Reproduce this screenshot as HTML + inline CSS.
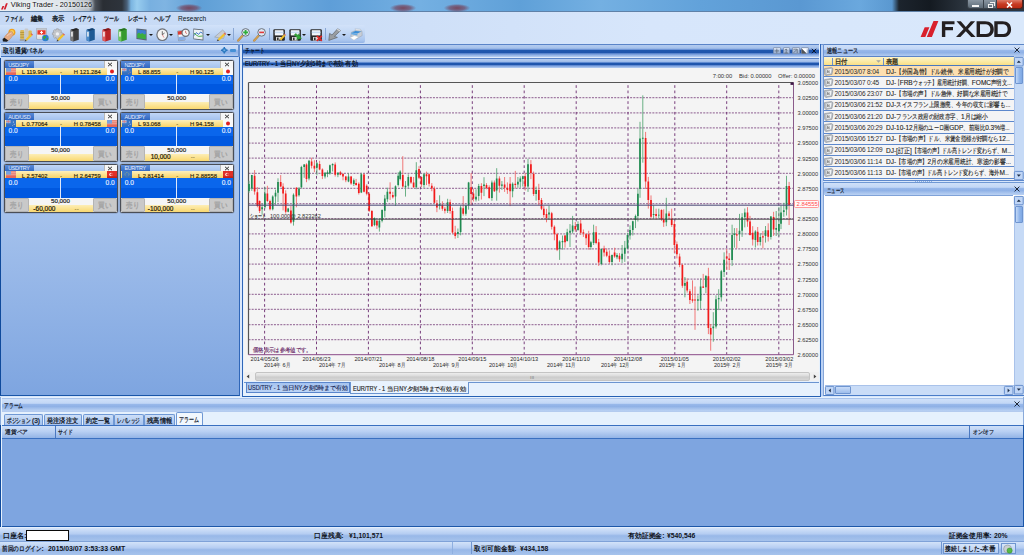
<!DOCTYPE html>
<html lang="ja"><head><meta charset="utf-8"><title>Viking Trader - 20150126</title>
<style>
*{box-sizing:border-box;margin:0;padding:0}
html,body{width:1024px;height:555px;overflow:hidden}
body{position:relative;background:#d7e6fb;font-family:"Liberation Sans",sans-serif;font-size:7px;color:#1a1a1a;line-height:1}
.a{position:absolute}
.t{position:absolute;white-space:nowrap;line-height:8px;height:8px}
svg{position:absolute;overflow:visible}
/* title bar */
#title{left:0;top:0;width:1024px;height:12px;background:linear-gradient(90deg,#e9eef2 0,#dfe6ec 60px,#b4bcc4 89px,#4a5058 95px,#2a2e34 103px,#2e343c 122px,#4a6078 127px,#7ab4e0 131px,#98cdef 137px,#78b0e0 150px,#7fb4e2 165px,#5f9fd6 200px,#74aee0 260px,#5e9ed8 330px,#74b0e2 420px,#5fa0d8 520px,#74b0e2 600px,#62a2da 700px,#5a98d2 800px,#6aa8de 860px,#5a98d0 892px,#1c242d 899px,#141a21 930px,#2c353f 966px)}
#title i{position:absolute;left:0;right:0;bottom:0;height:1px;background:#5f81a8}
#menu{left:0;top:12px;width:1024px;height:32px;background:linear-gradient(90deg,#c6d9f5 0,#c9dcf6 256px,#d2e2f9 512px,#d7e6fb 650px,#d9e8fb 1024px)}
#menu .t{top:14.5px;font-size:6.6px;color:#101820}
#tool{left:0;top:25px;width:365px;height:18px;background:linear-gradient(180deg,#d2e2f9 0,#c3d8f5 40%,#a9c5ee 85%,#94b4e6 100%);border-radius:0 2px 2px 0}
.dd{position:absolute;top:34px;width:0;height:0;border-left:2.2px solid transparent;border-right:2.2px solid transparent;border-top:2.5px solid #1a1a1a}
.sep{position:absolute;top:28px;width:1px;height:12px;background:#8aa7d4}
/* generic panel caption */
.cap{position:absolute;height:12px;background:linear-gradient(180deg,#cfe0f9 0,#c2d7f6 36%,#98b8ea 44%,#8fb1e6 62%,#a9c5ee 84%,#bad1f3 100%);border-top:1px solid #5c86c6}
.capA{position:absolute;height:12px;background:linear-gradient(180deg,#b4ccf0 0,#a4c0ea 27%,#6b93d6 38%,#2058ae 45%,#1f55ac 63%,#6a92d6 73%,#9ab8e8 88%,#b8cff2 100%);border-top:1px solid #5a84c8}
/* rate tile */
.tile{position:absolute;width:113.5px;height:49.5px;background:#f4f4f4;border:1px solid #4a4e56;border-radius:1.5px;box-shadow:0 0 0 .5px rgba(80,90,110,.35)}
.tile div{position:absolute}
.tl{left:0;top:0;width:111.5px;height:7px;background:linear-gradient(180deg,#c0d6f6,#a4c2ee)}
.tn{left:0;top:0;width:28.5px;height:7px;background:linear-gradient(180deg,#5a8ad8,#2f66c0)}
.tc{left:98.5px;top:0;width:13px;height:6.6px;background:#f6f6f6;border-left:.5px solid #b8b8b8}
.ty{left:0;top:6.6px;width:111.5px;height:7.1px;background:linear-gradient(180deg,#fdf0bd,#fbe08a 55%,#f8d468)}
.tb{left:0;top:13.7px;width:111.5px;height:9.5px;background:#0a66ec}
.tb2{left:0;top:23.2px;width:111.5px;height:9.8px;background:#0058e0}
.tv{left:54.6px;top:13px;width:1px;height:20px;background:#dfe8fa}
.bs{left:0;top:33px;width:24px;height:14.5px;background:#c9c9c9;border:.5px solid #b4b4b4;border-radius:1px}
.bb{left:87.5px;top:33px;width:24px;height:14.5px;background:#c9c9c9;border:.5px solid #b4b4b4;border-radius:1px}
.tw{left:24px;top:33px;width:63.5px;height:7.6px;background:#f5f5f5}
.ty2{left:24px;top:40.6px;width:63.5px;height:7px;background:linear-gradient(180deg,#fdeeb6,#f9d870)}

</style></head>
<body>
<div id="title" class="a"><i></i></div>
<div class="a" style="left:176px;top:3.6px;width:26px;height:8.4px;background:radial-gradient(ellipse at center,rgba(120,48,64,.8) 0,rgba(118,58,80,.6) 42%,rgba(110,90,140,0) 72%)"></div>
<div class="a" style="left:390px;top:3.6px;width:26px;height:8.4px;background:radial-gradient(ellipse at center,rgba(120,48,64,.8) 0,rgba(118,58,80,.6) 42%,rgba(110,90,140,0) 72%)"></div>
<div class="a" style="left:444px;top:3.6px;width:26px;height:8.4px;background:radial-gradient(ellipse at center,rgba(120,48,64,.8) 0,rgba(118,58,80,.6) 42%,rgba(110,90,140,0) 72%)"></div>
<svg style="left:1px;top:2.8px" width="7" height="6.6" viewBox="0 0 7 6.6"><path d="M0 6.4 L1.5 3 L3.3 3 L1.8 6.4Z M2.7 6.4 L5 0.2 L6.8 0.2 L4.5 6.4Z" fill="#d3202c"/></svg>
<div class="t" style="left:10.8px;top:1.3px;font-size:7.25px;color:#111;text-shadow:0 0 3px #fff,0 0 4px #fff;">Viking Trader - 20150126</div>
<div class="a" style="left:967px;top:0px;width:17px;height:9px;background:linear-gradient(180deg,#8a96a2,#5d6a76);border:1px solid #39414a;border-top:0;border-radius:0 0 0 3px"></div>
<div class="a" style="left:984px;top:0px;width:13px;height:9px;background:linear-gradient(180deg,#8a96a2,#5d6a76);border:1px solid #39414a;border-top:0;border-left:0"></div>
<div class="a" style="left:997px;top:0px;width:26px;height:9px;background:linear-gradient(180deg,#dd7b68,#c63b23 50%,#b82a14);border:1px solid #5a2018;border-top:0;border-left:0;border-radius:0 0 3px 0"></div>
<div class="a" style="left:972px;top:5px;width:7px;height:2px;background:#f4f4f4"></div>
<div class="a" style="left:987.5px;top:3.5px;width:5px;height:4px;border:1px solid #f0f0f0"></div>
<div class="a" style="left:989.5px;top:2px;width:5px;height:4px;border:1px solid #f0f0f0;border-left:0;border-bottom:0"></div>
<svg style="left:1006px;top:2px" width="7" height="6" viewBox="0 0 7 6"><path d="M1 0.5 L6 5.5 M6 0.5 L1 5.5" stroke="#fff" stroke-width="1.6"/></svg>
<div id="menu" class="a"></div>
<svg style="left:4.5px;top:13.8px" width="18" height="8.8"><text x="0" y="6.8" font-size="6.8" fill="#0c1420" font-weight="normal" textLength="18" lengthAdjust="spacingAndGlyphs" stroke="#0c1420" stroke-width="0.3">ファイル</text></svg>
<svg style="left:31px;top:13.8px" width="12.5" height="8.8"><text x="0" y="6.8" font-size="6.8" fill="#0c1420" font-weight="normal" textLength="12.5" lengthAdjust="spacingAndGlyphs" stroke="#0c1420" stroke-width="0.3">編集</text></svg>
<svg style="left:52px;top:13.8px" width="12.5" height="8.8"><text x="0" y="6.8" font-size="6.8" fill="#0c1420" font-weight="normal" textLength="12.5" lengthAdjust="spacingAndGlyphs" stroke="#0c1420" stroke-width="0.3">表示</text></svg>
<svg style="left:73px;top:13.8px" width="23.5" height="8.8"><text x="0" y="6.8" font-size="6.8" fill="#0c1420" font-weight="normal" textLength="23.5" lengthAdjust="spacingAndGlyphs" stroke="#0c1420" stroke-width="0.3">レイアウト</text></svg>
<svg style="left:104px;top:13.8px" width="15" height="8.8"><text x="0" y="6.8" font-size="6.8" fill="#0c1420" font-weight="normal" textLength="15" lengthAdjust="spacingAndGlyphs" stroke="#0c1420" stroke-width="0.3">ツール</text></svg>
<svg style="left:127.5px;top:13.8px" width="20" height="8.8"><text x="0" y="6.8" font-size="6.8" fill="#0c1420" font-weight="normal" textLength="20" lengthAdjust="spacingAndGlyphs" stroke="#0c1420" stroke-width="0.3">レポート</text></svg>
<svg style="left:154px;top:13.8px" width="16" height="8.8"><text x="0" y="6.8" font-size="6.8" fill="#0c1420" font-weight="normal" textLength="16" lengthAdjust="spacingAndGlyphs" stroke="#0c1420" stroke-width="0.3">ヘルプ</text></svg>
<div class="t" style="left:178px;top:15px;font-size:6.6px;color:#0c1420;">Research</div>
<div id="tool" class="a"></div>
<div class="a" style="left:0px;top:43.9px;width:1024px;height:1.1px;background:#6a92d2"></div>
<svg style="left:2px;top:27.5px" width="14" height="14" viewBox="0 0 14 14"><circle cx="9.9" cy="4.2" r="3.5" fill="#f0a01c"/><circle cx="9.9" cy="4.2" r="2.1" fill="#f9d458"/><path d="M1.8 10.4 C3.2 7.4 5.6 5 8.4 3.6 C10 3 11 4 10.4 5 C11.6 5.6 11.6 7 10.6 7.6 C9.6 9.8 7.6 11.8 5.6 13Z" fill="#e3ab86" stroke="#b98662" stroke-width=".5"/><path d="M5 8 C6.4 6.6 8 5.6 9.4 5" stroke="#f2cdb2" stroke-width=".9" fill="none"/><path d="M0.6 11 L2.4 9.8 L6.2 12.6 L4.8 13.8 L0.9 13.6Z" fill="#1c1c1c"/></svg>
<svg style="left:18.5px;top:28px" width="14" height="13.5" viewBox="0 0 14 13.5"><rect x="1.2" y="2" width="4" height="9.6" rx="1" fill="#d9b95e"/><rect x="1.2" y="4" width="4" height="0.7" fill="#a88a36"/><rect x="1.2" y="6.4" width="4" height="0.7" fill="#a88a36"/><rect x="1.2" y="8.8" width="4" height="0.7" fill="#a88a36"/><rect x="5.6" y="0.6" width="3.6" height="10" rx="1" fill="#c9c9c9"/><rect x="9.4" y="2.6" width="3.4" height="6" rx="1" fill="#d9b95e"/><path d="M6.2 11.6 L11.6 6 L13.2 7.6 L7.8 13Z" fill="#f0c22c"/><path d="M6.2 11.6 L7.8 13 L5.6 13.4Z" fill="#444"/><path d="M11.6 6 L12.4 5.2 L14 6.8 L13.2 7.6Z" fill="#e05a4a"/><rect x="0.8" y="11.2" width="5" height="1.6" fill="#9c9c9c"/></svg>
<svg style="left:35.5px;top:28px" width="13.5" height="13.5" viewBox="0 0 13.5 13.5"><rect x="0.8" y="0.5" width="9.4" height="10.6" fill="#f4f5f7" stroke="#8e949c" stroke-width=".6"/><rect x="0.8" y="0.5" width="9.4" height="1.5" fill="#c4c9d0"/><rect x="1.4" y="2.2" width="8.2" height="4.4" fill="#e8392c"/><rect x="5" y="2.9" width="1" height="3" fill="#fff"/><rect x="4" y="3.9" width="3" height="1" fill="#fff"/><path d="M1.6 8 H7 M1.6 9.4 H6" stroke="#c8ccd2" stroke-width=".5"/><circle cx="9.4" cy="10" r="3.3" fill="#2f7fd0"/><path d="M7.4 8.4 C8.4 7.6 9.8 7.8 10.2 9 C9.6 10 8.6 10.2 8.4 11.6 C7.4 11 6.8 9.6 7.4 8.4Z M10.8 10.4 L12.2 10 L11.8 11.8 L10.6 12.2Z" fill="#3da83a"/></svg>
<svg style="left:50.5px;top:28px" width="14" height="13.5" viewBox="0 0 14 13.5"><path d="M5.4 0.8 L7.4 0.8 L7.8 2.2 L9.2 1.6 L10.6 3 L9.8 4.4 L11.4 4.8 L11.4 6.8 L9.8 7.2 L10.6 8.8 L9.2 10.2 L7.8 9.4 L7.4 11 L5.4 11 L5 9.4 L3.6 10.2 L2.2 8.8 L3 7.2 L1.4 6.8 L1.4 4.8 L3 4.4 L2.2 3 L3.6 1.6 L5 2.2Z" fill="#c4c6ca" stroke="#8c8e92" stroke-width=".5"/><circle cx="6.4" cy="5.9" r="1.7" fill="#eef0f3"/><path d="M6.2 11.6 L11.6 6 L13.2 7.6 L7.8 13Z" fill="#f0c22c"/><path d="M6.2 11.6 L7.8 13 L5.6 13.4Z" fill="#444"/><path d="M11.6 6 L12.4 5.2 L14 6.8 L13.2 7.6Z" fill="#e05a4a"/></svg>
<svg style="left:70.4px;top:27.8px" width="9.4" height="13.8" viewBox="0 0 9.4 13.8"><path d="M0.6 1.8 L6.2 0.3 L8.8 1.3 L8.8 11.8 L3.4 13.5 L0.6 12.4Z" fill="#3e3e3e"/><path d="M0.6 1.8 L3.4 2.9 L3.4 13.5 L0.6 12.4Z" fill="#7c7c7c"/><path d="M0.6 1.8 L6.2 0.3 L8.8 1.3 L3.4 2.9Z" fill="#262626"/><rect x="1.2" y="3.8" width="1.5" height="4.8" fill="#f4f4f4"/></svg>
<svg style="left:86.4px;top:27.8px" width="9.4" height="13.8" viewBox="0 0 9.4 13.8"><path d="M0.6 1.8 L6.2 0.3 L8.8 1.3 L8.8 11.8 L3.4 13.5 L0.6 12.4Z" fill="#1d5a94"/><path d="M0.6 1.8 L3.4 2.9 L3.4 13.5 L0.6 12.4Z" fill="#4c8ccc"/><path d="M0.6 1.8 L6.2 0.3 L8.8 1.3 L3.4 2.9Z" fill="#143f6c"/><rect x="1.2" y="3.8" width="1.5" height="4.8" fill="#f4f4f4"/></svg>
<svg style="left:102.4px;top:27.8px" width="9.4" height="13.8" viewBox="0 0 9.4 13.8"><path d="M0.6 1.8 L6.2 0.3 L8.8 1.3 L8.8 11.8 L3.4 13.5 L0.6 12.4Z" fill="#b82426"/><path d="M0.6 1.8 L3.4 2.9 L3.4 13.5 L0.6 12.4Z" fill="#e06060"/><path d="M0.6 1.8 L6.2 0.3 L8.8 1.3 L3.4 2.9Z" fill="#80181a"/><rect x="1.2" y="3.8" width="1.5" height="4.8" fill="#f4f4f4"/></svg>
<svg style="left:118.4px;top:27.8px" width="9.4" height="13.8" viewBox="0 0 9.4 13.8"><path d="M0.6 1.8 L6.2 0.3 L8.8 1.3 L8.8 11.8 L3.4 13.5 L0.6 12.4Z" fill="#369a2e"/><path d="M0.6 1.8 L3.4 2.9 L3.4 13.5 L0.6 12.4Z" fill="#70c860"/><path d="M0.6 1.8 L6.2 0.3 L8.8 1.3 L3.4 2.9Z" fill="#267020"/><rect x="1.2" y="3.8" width="1.5" height="4.8" fill="#f4f4f4"/></svg>
<svg style="left:136px;top:28.2px" width="11.5" height="13" viewBox="0 0 11.5 13"><path d="M0.4 0.6 L10.6 1.6 L10.6 12.4 L0.4 11Z" fill="#5a6470"/><path d="M1.2 1.6 L9.8 2.4 L9.8 11.2 L1.2 10Z" fill="#3f7fd0"/><path d="M1.2 6 L3 4.6 L4.6 6 L6.4 5 L8 6.6 L9.8 6 L9.8 11.2 L1.2 10Z" fill="#3cae3c"/></svg>
<svg style="left:155.8px;top:27.8px" width="12.6" height="13.4" viewBox="0 0 12.6 13.4"><ellipse cx="6.3" cy="6.7" rx="6" ry="6.4" fill="#6e7278"/><ellipse cx="6.3" cy="6.7" rx="4.8" ry="5.2" fill="#f4f4f4"/><path d="M6.3 6.7 L6.3 3.2 M6.3 6.7 L8.6 5" stroke="#333" stroke-width=".7"/><path d="M6.3 6.7 L8 9.6" stroke="#d03030" stroke-width=".5"/></svg>
<svg style="left:176.8px;top:28px" width="13" height="13.4" viewBox="0 0 13 13.4"><path d="M0.6 3.2 L7.2 2.4 L8 12 L1.6 12.8Z" fill="#eef2f8" stroke="#7a8494" stroke-width=".7"/><path d="M0.8 3.4 L7.2 2.6 L7.5 6 L1.1 6.8Z" fill="#dc3c32"/><path d="M1.4 9 L7.8 8.2 L8 11.8 L1.7 12.6Z" fill="#88aee4"/><circle cx="8.6" cy="4.8" r="4.2" fill="#6a6e74"/><circle cx="8.6" cy="4.8" r="3" fill="#f6f6f6"/><path d="M8.6 4.8 L8.6 2.8 M8.6 4.8 L10 5.6" stroke="#c03030" stroke-width=".6"/></svg>
<svg style="left:193.3px;top:28.2px" width="11.5" height="13" viewBox="0 0 11.5 13"><path d="M0.4 0.6 L10.4 1.4 L10.4 12.4 L0.4 11.2Z" fill="#5e6670"/><path d="M1 1.4 L9.6 2.2 L9.6 11.4 L1 10.4Z" fill="#eef2f4"/><path d="M1 7.6 L3.4 4.6 L5.6 6.4 L7.6 4 L9.6 5.4" stroke="#2c6cc8" stroke-width=".9" fill="none"/><path d="M1 5 L3.2 7 L5.6 8.4 L9.6 8" stroke="#40a840" stroke-width=".9" fill="none"/></svg>
<svg style="left:213.5px;top:28.5px" width="13.5" height="12.5" viewBox="0 0 13.5 12.5"><path d="M0.6 8 L8.6 1 L11.4 3.6 L9.6 9.4 L5.6 9Z" fill="#c8ccd2" stroke="#8a9098" stroke-width=".5"/><path d="M3.6 10.2 L9.6 4.4 L11.2 6 L5.2 11.8Z" fill="#f0c22c"/><path d="M3.6 10.2 L5.2 11.8 L2.8 12.2Z" fill="#4a4a4a"/><path d="M9.6 4.4 L10.6 3.4 L12.2 5 L11.2 6Z" fill="#e0685a"/></svg>
<div class="sep" style="left:233px"></div>
<svg style="left:236.5px;top:27.8px" width="13.5" height="13.6" viewBox="0 0 13.5 13.6"><path d="M1.2 12.6 L6 7.2" stroke="#b8863c" stroke-width="2.2" stroke-linecap="round"/><path d="M1.2 12.6 L6 7.2" stroke="#e0b060" stroke-width="1" stroke-linecap="round"/><circle cx="8.6" cy="4.4" r="3.8" fill="#dfe9f4" stroke="#6a727c" stroke-width="1"/><path d="M8.6 2 V6.8 M6.2 4.4 H11" stroke="#2fae3a" stroke-width="1.8"/></svg>
<svg style="left:253px;top:27.8px" width="13.5" height="13.6" viewBox="0 0 13.5 13.6"><path d="M1.2 12.6 L6 7.2" stroke="#b8863c" stroke-width="2.2" stroke-linecap="round"/><path d="M1.2 12.6 L6 7.2" stroke="#e0b060" stroke-width="1" stroke-linecap="round"/><circle cx="8.6" cy="4.4" r="3.8" fill="#dfe9f4" stroke="#6a727c" stroke-width="1"/><path d="M6.2 4.4 H11" stroke="#e03a3a" stroke-width="1.6"/></svg>
<div class="sep" style="left:268.5px"></div>
<svg style="left:272.8px;top:28.6px" width="12.5" height="12.2" viewBox="0 0 12.5 12.2"><rect x="0.3" y="0.3" width="11.6" height="11.4" rx="1.2" fill="#2b2b2b"/><rect x="1.8" y="1.2" width="8.6" height="5.2" fill="#f4f7fb"/><rect x="1.8" y="2.6" width="8.6" height="1.6" fill="#c8dcf2"/><rect x="3" y="8" width="5.6" height="3.6" fill="#d8d8d8"/><rect x="4" y="8.6" width="1.6" height="2.6" fill="#333"/></svg>
<svg style="left:279px;top:33px" width="7" height="8" viewBox="0 0 7 8"><path d="M0.6 6 L5 1.4 L6.4 2.8 L2 7.4Z" fill="#f0c22c"/><path d="M0.6 6 L2 7.4 L0 8Z" fill="#444"/><path d="M5 1.4 L5.6 0.6 L7 2 L6.4 2.8Z" fill="#e0685a"/></svg>
<svg style="left:289px;top:28.6px" width="12.5" height="12.2" viewBox="0 0 12.5 12.2"><rect x="0.3" y="0.3" width="11.6" height="11.4" rx="1.2" fill="#2b2b2b"/><rect x="1.8" y="1.2" width="8.6" height="5.2" fill="#f4f7fb"/><rect x="1.8" y="2.6" width="8.6" height="1.6" fill="#c8dcf2"/><rect x="3" y="8" width="5.6" height="3.6" fill="#d8d8d8"/><rect x="4" y="8.6" width="1.6" height="2.6" fill="#333"/></svg>
<svg style="left:293.5px;top:33.4px" width="8" height="7.6" viewBox="0 0 8 7.6"><path d="M0.4 1.6 L2 0.4 L4 2.4 L4.6 0.8 L7.4 5.6 L2.6 6.6 L3.4 4.8 L1.2 3Z" fill="#34a838" stroke="#1e7a22" stroke-width=".4"/></svg>
<svg style="left:309.8px;top:28.6px" width="12.5" height="12.2" viewBox="0 0 12.5 12.2"><rect x="0.3" y="0.3" width="11.6" height="11.4" rx="1.2" fill="#2b2b2b"/><rect x="1.8" y="1.2" width="8.6" height="5.2" fill="#f4f7fb"/><rect x="1.8" y="2.6" width="8.6" height="1.6" fill="#c8dcf2"/><rect x="3" y="8" width="5.6" height="3.6" fill="#d8d8d8"/><rect x="4" y="8.6" width="1.6" height="2.6" fill="#333"/></svg>
<svg style="left:316px;top:34.5px" width="6.5" height="6.5" viewBox="0 0 6.5 6.5"><path d="M0.8 0.8 L5.8 5.8 M5.8 0.8 L0.8 5.8" stroke="#e02828" stroke-width="1.7"/></svg>
<div class="sep" style="left:324.8px"></div>
<svg style="left:328px;top:28px" width="13.5" height="13" viewBox="0 0 13.5 13"><path d="M9.6 0.8 L12.6 2.6 L6.4 8.4 L9.4 9.4 L0.8 12.4 L1.6 5.4 L4 7Z" fill="#9a9ea2" stroke="#62666a" stroke-width=".7"/><path d="M9.6 0.8 L12.6 2.6 L11.6 3.4 L8.8 1.6Z" fill="#d8dadc"/></svg>
<svg style="left:348.5px;top:28.2px" width="13.8" height="13" viewBox="0 0 13.8 13"><path d="M6 0.8 L11.4 1.2 L12.6 3.4 L7 3.2Z" fill="#e8ecf2" stroke="#a0a8b4" stroke-width=".4"/><path d="M2.4 4.2 L6.4 2.6 L13 3.2 L13.2 7.6 L8.2 10.4 L1.8 8.4Z" fill="#c8ced6" stroke="#8a929e" stroke-width=".4"/><path d="M2.6 4.4 L6.4 2.9 L12.4 3.4 L8.4 5.6Z" fill="#3a8ed8"/><path d="M2.4 4.6 L8.4 5.8 L8.4 7.4 L2.2 6.2Z" fill="#62a8e4"/><path d="M0.8 9.6 L5.6 7.6 L9.8 9 L5 12.2Z" fill="#fff" stroke="#aab2be" stroke-width=".4"/></svg>
<div class="dd" style="left:149px"></div>
<div class="dd" style="left:169.3px"></div>
<div class="dd" style="left:205.8px"></div>
<div class="dd" style="left:227.1px"></div>
<div class="dd" style="left:302.1px"></div>
<div class="dd" style="left:341.8px"></div>
<svg style="left:920px;top:21px" width="92" height="17" viewBox="0 0 92 17">
<path d="M0.6 16.1 H5.3 L9.4 6.3 H4.7Z M6.8 16.1 H11.9 L18.4 0 H13.5Z" fill="#d8202c"/>
<g fill="#231f20">
<path d="M21.9 0.2 H34.5 V3.3 H25.3 V6.1 H33 V9.2 H25.3 V16.1 H21.9Z"/>
<path d="M36.5 0.2 H40.8 L45.8 5.9 L50.8 0.2 H55.1 L48 8.1 L55.6 16.1 H51.2 L45.8 10.3 L40.4 16.1 H36 L43.6 8.1Z"/>
<path d="M56.6 0.2 H65 C70.8 0.2 73.8 3.4 73.8 8.15 C73.8 12.9 70.8 16.1 65 16.1 H56.6Z M60 3.3 V13 H64.7 C68.5 13 70.3 11.4 70.3 8.15 C70.3 4.9 68.5 3.3 64.7 3.3Z" fill-rule="evenodd"/>
<path d="M74.3 0.2 H82.4 C88.2 0.2 91.1 3.4 91.1 8.15 C91.1 12.9 88.2 16.1 82.4 16.1 H74.3Z M77.7 3.3 V13 H82.1 C85.9 13 87.6 11.4 87.6 8.15 C87.6 4.9 85.9 3.3 82.1 3.3Z" fill-rule="evenodd"/>
</g></svg>
<div class="a" style="left:0px;top:44px;width:239.5px;height:352px;background:linear-gradient(180deg,#c9dcf8 0,#c6daf7 12px,#7ea5e0 100%);border-left:1.2px solid #0f4a9c;border-right:1.5px solid #2f66b8;border-bottom:1.7px solid #1a56a8"></div>
<div class="a" style="left:238px;top:44px;width:1.5px;height:13px;background:#6a92d0"></div>
<div class="a" style="left:0px;top:44px;width:1.2px;height:13.5px;background:#cfe0f8"></div>
<div class="cap" style="left:0.8px;top:44px;width:237.6px;height:12.5px"></div>
<div class="a" style="left:1.2px;top:56.2px;width:237px;height:1.3px;background:#3f74c0"></div>
<svg style="left:2.8px;top:46.2px" width="41" height="9"><text x="0" y="7" font-size="7" fill="#101824" font-weight="normal" textLength="41" lengthAdjust="spacingAndGlyphs" stroke="#101824" stroke-width="0.3">取引通貨パネル</text></svg>
<svg style="left:220.6px;top:47.2px" width="6.6" height="6.6" viewBox="0 0 8 8"><circle cx="4" cy="4" r="2.9" fill="#2f80c8"/><path d="M4 0 V8 M0 4 H8" stroke="#2a74bc" stroke-width="1.8"/><circle cx="4" cy="4" r="1.3" fill="#6fb0e6"/></svg>
<div class="a" style="left:230px;top:49.4px;width:6.4px;height:2.4px;background:#4590d6;border-radius:1px"></div>
<div class="tile" style="left:4px;top:60px"><div class="tl"></div><div class="tn"></div><div class="tc"></div><div class="ty"></div><div class="tb"></div><div class="tb2"></div><div class="tv"></div><div class="bs"></div><div class="bb"></div><div class="tw"></div><div class="ty2"></div></div>
<div class="t" style="left:8.2px;top:60.7px;font-size:5.4px;color:#e8f0fc;letter-spacing:-.32px;">USD/JPY</div>
<svg style="left:107.4px;top:62.2px" width="6" height="5" viewBox="0 0 6 5"><path d="M1 0.8 L5 4.2 M5 0.8 L1 4.2" stroke="#2c2c2c" stroke-width=".95"/></svg>
<svg style="left:5.6px;top:67.5px;overflow:hidden" width="10" height="7" viewBox="0 0 10 7"><rect width="10" height="7" fill="#ec8a7c"/><rect y="1.2" width="10" height=".6" fill="#f2b0a6"/><rect y="3" width="10" height=".6" fill="#f0a499"/><rect y="4.6" width="10" height="2.4" fill="#e6685a"/><rect width="5" height="3.6" fill="#7aa2de"/></svg>
<svg style="left:106.5px;top:67.5px;overflow:hidden" width="10" height="7" viewBox="0 0 10 7"><rect width="10" height="7" fill="#fafafa"/><circle cx="5" cy="3.5" r="2" fill="#e02020"/></svg>
<div class="t" style="left:21.8px;top:68px;font-size:5.85px;color:#1c1808;-webkit-text-stroke:.14px #1c1808;">L 119.904</div>
<div class="t" style="left:60px;top:68px;font-size:6.1px;color:#2a2410;">-</div>
<div class="t" style="left:73.8px;top:68px;font-size:5.85px;color:#1c1808;-webkit-text-stroke:.14px #1c1808;">H 121.284</div>
<div class="t" style="left:8.5px;top:75.2px;font-size:6.6px;color:#e6eeff;-webkit-text-stroke:.15px #e6eeff;">0.0</div>
<div class="t" style="left:105.5px;top:75.2px;font-size:6.6px;color:#e6eeff;-webkit-text-stroke:.15px #e6eeff;">0.0</div>
<svg style="left:9.6px;top:96.8px" width="13" height="9.8"><text x="0" y="7.8" font-size="7.8" fill="#a2a2a2" font-weight="normal" textLength="13" lengthAdjust="spacingAndGlyphs" stroke="#a2a2a2" stroke-width="0.3">売り</text></svg>
<svg style="left:97.6px;top:96.8px" width="13" height="9.8"><text x="0" y="7.8" font-size="7.8" fill="#a2a2a2" font-weight="normal" textLength="13" lengthAdjust="spacingAndGlyphs" stroke="#a2a2a2" stroke-width="0.3">買い</text></svg>
<div class="t" style="left:51px;top:93.6px;font-size:6.2px;color:#181818;-webkit-text-stroke:.18px #181818;">50,000</div>
<div class="tile" style="left:120.2px;top:60px"><div class="tl"></div><div class="tn"></div><div class="tc"></div><div class="ty"></div><div class="tb"></div><div class="tb2"></div><div class="tv"></div><div class="bs"></div><div class="bb"></div><div class="tw"></div><div class="ty2"></div></div>
<div class="t" style="left:124.4px;top:60.7px;font-size:5.4px;color:#e8f0fc;letter-spacing:-.32px;">NZD/JPY</div>
<svg style="left:223.6px;top:62.2px" width="6" height="5" viewBox="0 0 6 5"><path d="M1 0.8 L5 4.2 M5 0.8 L1 4.2" stroke="#2c2c2c" stroke-width=".95"/></svg>
<svg style="left:121.8px;top:67.5px;overflow:hidden" width="10" height="7" viewBox="0 0 10 7"><rect width="10" height="7" fill="#3a76c6"/><rect width="4.6" height="3.2" fill="#9ab8e6"/><path d="M0 1.6 H4.6 M2.3 0 V3.2" stroke="#e07a7a" stroke-width=".7"/><circle cx="7.4" cy="2" r=".5" fill="#e89090"/><circle cx="8.2" cy="4.2" r=".5" fill="#e89090"/><circle cx="6.6" cy="5.4" r=".5" fill="#e89090"/><rect y="4.8" width="10" height="2.2" fill="#2c66b8" opacity=".5"/></svg>
<svg style="left:222.7px;top:67.5px;overflow:hidden" width="10" height="7" viewBox="0 0 10 7"><rect width="10" height="7" fill="#fafafa"/><circle cx="5" cy="3.5" r="2" fill="#e02020"/></svg>
<div class="t" style="left:138px;top:68px;font-size:5.85px;color:#1c1808;-webkit-text-stroke:.14px #1c1808;">L 88.855</div>
<div class="t" style="left:176.2px;top:68px;font-size:6.1px;color:#2a2410;">-</div>
<div class="t" style="left:190px;top:68px;font-size:5.85px;color:#1c1808;-webkit-text-stroke:.14px #1c1808;">H 90.125</div>
<div class="t" style="left:124.7px;top:75.2px;font-size:6.6px;color:#e6eeff;-webkit-text-stroke:.15px #e6eeff;">0.0</div>
<div class="t" style="left:221.7px;top:75.2px;font-size:6.6px;color:#e6eeff;-webkit-text-stroke:.15px #e6eeff;">0.0</div>
<svg style="left:125.8px;top:96.8px" width="13" height="9.8"><text x="0" y="7.8" font-size="7.8" fill="#a2a2a2" font-weight="normal" textLength="13" lengthAdjust="spacingAndGlyphs" stroke="#a2a2a2" stroke-width="0.3">売り</text></svg>
<svg style="left:213.8px;top:96.8px" width="13" height="9.8"><text x="0" y="7.8" font-size="7.8" fill="#a2a2a2" font-weight="normal" textLength="13" lengthAdjust="spacingAndGlyphs" stroke="#a2a2a2" stroke-width="0.3">買い</text></svg>
<div class="t" style="left:167.2px;top:93.6px;font-size:6.2px;color:#181818;-webkit-text-stroke:.18px #181818;">50,000</div>
<div class="tile" style="left:4px;top:112px"><div class="tl"></div><div class="tn"></div><div class="tc"></div><div class="ty"></div><div class="tb"></div><div class="tb2"></div><div class="tv"></div><div class="bs"></div><div class="bb"></div><div class="tw"></div><div class="ty2"></div></div>
<div class="t" style="left:8.2px;top:112.7px;font-size:5.4px;color:#e8f0fc;letter-spacing:-.32px;">AUD/USD</div>
<svg style="left:107.4px;top:114.2px" width="6" height="5" viewBox="0 0 6 5"><path d="M1 0.8 L5 4.2 M5 0.8 L1 4.2" stroke="#2c2c2c" stroke-width=".95"/></svg>
<svg style="left:5.6px;top:119.5px;overflow:hidden" width="10" height="7" viewBox="0 0 10 7"><rect width="10" height="7" fill="#3a76c6"/><rect width="4.6" height="3.2" fill="#9ab8e6"/><path d="M0 1.6 H4.6 M2.3 0 V3.2" stroke="#e07a7a" stroke-width=".7"/><circle cx="7.4" cy="2" r=".5" fill="#f0f0f8"/><circle cx="8.2" cy="4.2" r=".5" fill="#f0f0f8"/><circle cx="6.6" cy="5.4" r=".5" fill="#f0f0f8"/><rect y="4.8" width="10" height="2.2" fill="#2c66b8" opacity=".5"/></svg>
<svg style="left:106.5px;top:119.5px;overflow:hidden" width="10" height="7" viewBox="0 0 10 7"><rect width="10" height="7" fill="#ec8a7c"/><rect y="1.2" width="10" height=".6" fill="#f2b0a6"/><rect y="3" width="10" height=".6" fill="#f0a499"/><rect y="4.6" width="10" height="2.4" fill="#e6685a"/><rect width="5" height="3.6" fill="#7aa2de"/></svg>
<div class="t" style="left:21.8px;top:120px;font-size:5.85px;color:#1c1808;-webkit-text-stroke:.14px #1c1808;">L 0.77064</div>
<div class="t" style="left:60px;top:120px;font-size:6.1px;color:#2a2410;">-</div>
<div class="t" style="left:73.8px;top:120px;font-size:5.85px;color:#1c1808;-webkit-text-stroke:.14px #1c1808;">H 0.78458</div>
<div class="t" style="left:8.5px;top:127.2px;font-size:6.6px;color:#e6eeff;-webkit-text-stroke:.15px #e6eeff;">0.0</div>
<div class="t" style="left:105.5px;top:127.2px;font-size:6.6px;color:#e6eeff;-webkit-text-stroke:.15px #e6eeff;">0.0</div>
<svg style="left:9.6px;top:148.8px" width="13" height="9.8"><text x="0" y="7.8" font-size="7.8" fill="#a2a2a2" font-weight="normal" textLength="13" lengthAdjust="spacingAndGlyphs" stroke="#a2a2a2" stroke-width="0.3">売り</text></svg>
<svg style="left:97.6px;top:148.8px" width="13" height="9.8"><text x="0" y="7.8" font-size="7.8" fill="#a2a2a2" font-weight="normal" textLength="13" lengthAdjust="spacingAndGlyphs" stroke="#a2a2a2" stroke-width="0.3">買い</text></svg>
<div class="t" style="left:51px;top:145.6px;font-size:6.2px;color:#181818;-webkit-text-stroke:.18px #181818;">50,000</div>
<div class="tile" style="left:120.2px;top:112px"><div class="tl"></div><div class="tn"></div><div class="tc"></div><div class="ty"></div><div class="tb"></div><div class="tb2"></div><div class="tv"></div><div class="bs"></div><div class="bb"></div><div class="tw"></div><div class="ty2"></div></div>
<div class="t" style="left:124.4px;top:112.7px;font-size:5.4px;color:#e8f0fc;letter-spacing:-.32px;">AUD/JPY</div>
<svg style="left:223.6px;top:114.2px" width="6" height="5" viewBox="0 0 6 5"><path d="M1 0.8 L5 4.2 M5 0.8 L1 4.2" stroke="#2c2c2c" stroke-width=".95"/></svg>
<svg style="left:121.8px;top:119.5px;overflow:hidden" width="10" height="7" viewBox="0 0 10 7"><rect width="10" height="7" fill="#3a76c6"/><rect width="4.6" height="3.2" fill="#9ab8e6"/><path d="M0 1.6 H4.6 M2.3 0 V3.2" stroke="#e07a7a" stroke-width=".7"/><circle cx="7.4" cy="2" r=".5" fill="#f0f0f8"/><circle cx="8.2" cy="4.2" r=".5" fill="#f0f0f8"/><circle cx="6.6" cy="5.4" r=".5" fill="#f0f0f8"/><rect y="4.8" width="10" height="2.2" fill="#2c66b8" opacity=".5"/></svg>
<svg style="left:222.7px;top:119.5px;overflow:hidden" width="10" height="7" viewBox="0 0 10 7"><rect width="10" height="7" fill="#fafafa"/><circle cx="5" cy="3.5" r="2" fill="#e02020"/></svg>
<div class="t" style="left:138px;top:120px;font-size:5.85px;color:#1c1808;-webkit-text-stroke:.14px #1c1808;">L 93.068</div>
<div class="t" style="left:176.2px;top:120px;font-size:6.1px;color:#2a2410;">-</div>
<div class="t" style="left:190px;top:120px;font-size:5.85px;color:#1c1808;-webkit-text-stroke:.14px #1c1808;">H 94.158</div>
<div class="t" style="left:124.7px;top:127.2px;font-size:6.6px;color:#e6eeff;-webkit-text-stroke:.15px #e6eeff;">0.0</div>
<div class="t" style="left:221.7px;top:127.2px;font-size:6.6px;color:#e6eeff;-webkit-text-stroke:.15px #e6eeff;">0.0</div>
<svg style="left:125.8px;top:148.8px" width="13" height="9.8"><text x="0" y="7.8" font-size="7.8" fill="#a2a2a2" font-weight="normal" textLength="13" lengthAdjust="spacingAndGlyphs" stroke="#a2a2a2" stroke-width="0.3">売り</text></svg>
<svg style="left:213.8px;top:148.8px" width="13" height="9.8"><text x="0" y="7.8" font-size="7.8" fill="#a2a2a2" font-weight="normal" textLength="13" lengthAdjust="spacingAndGlyphs" stroke="#a2a2a2" stroke-width="0.3">買い</text></svg>
<div class="t" style="left:167.2px;top:145.6px;font-size:6.2px;color:#181818;-webkit-text-stroke:.18px #181818;">50,000</div>
<div class="t" style="left:140.6px;top:153px;font-size:6.5px;color:#1c1808;width:40px;text-align:center;-webkit-text-stroke:.2px #1c1808;">10,000</div>
<div class="t" style="left:190.8px;top:153px;font-size:6.2px;color:#5a4c1c;">--</div>
<div class="tile" style="left:4px;top:163.6px"><div class="tl"></div><div class="tn"></div><div class="tc"></div><div class="ty"></div><div class="tb"></div><div class="tb2"></div><div class="tv"></div><div class="bs"></div><div class="bb"></div><div class="tw"></div><div class="ty2"></div></div>
<div class="t" style="left:8.2px;top:164.3px;font-size:5.4px;color:#e8f0fc;letter-spacing:-.32px;">USD/TRY</div>
<svg style="left:107.4px;top:165.8px" width="6" height="5" viewBox="0 0 6 5"><path d="M1 0.8 L5 4.2 M5 0.8 L1 4.2" stroke="#2c2c2c" stroke-width=".95"/></svg>
<svg style="left:5.6px;top:171.1px;overflow:hidden" width="10" height="7" viewBox="0 0 10 7"><rect width="10" height="7" fill="#ec8a7c"/><rect y="1.2" width="10" height=".6" fill="#f2b0a6"/><rect y="3" width="10" height=".6" fill="#f0a499"/><rect y="4.6" width="10" height="2.4" fill="#e6685a"/><rect width="5" height="3.6" fill="#7aa2de"/></svg>
<svg style="left:106.5px;top:171.1px;overflow:hidden" width="10" height="7" viewBox="0 0 10 7"><rect width="10" height="7" fill="#e03028"/><circle cx="4" cy="3.5" r="1.7" fill="#fff"/><circle cx="4.6" cy="3.5" r="1.35" fill="#e03028"/><rect y="5.4" width="10" height="1.6" fill="#c42018"/></svg>
<div class="t" style="left:21.8px;top:171.6px;font-size:5.85px;color:#1c1808;-webkit-text-stroke:.14px #1c1808;">L 2.57402</div>
<div class="t" style="left:60px;top:171.6px;font-size:6.1px;color:#2a2410;">-</div>
<div class="t" style="left:73.8px;top:171.6px;font-size:5.85px;color:#1c1808;-webkit-text-stroke:.14px #1c1808;">H 2.64759</div>
<div class="t" style="left:8.5px;top:178.8px;font-size:6.6px;color:#e6eeff;-webkit-text-stroke:.15px #e6eeff;">0.0</div>
<div class="t" style="left:105.5px;top:178.8px;font-size:6.6px;color:#e6eeff;-webkit-text-stroke:.15px #e6eeff;">0.0</div>
<svg style="left:9.6px;top:200.4px" width="13" height="9.8"><text x="0" y="7.8" font-size="7.8" fill="#a2a2a2" font-weight="normal" textLength="13" lengthAdjust="spacingAndGlyphs" stroke="#a2a2a2" stroke-width="0.3">売り</text></svg>
<svg style="left:97.6px;top:200.4px" width="13" height="9.8"><text x="0" y="7.8" font-size="7.8" fill="#a2a2a2" font-weight="normal" textLength="13" lengthAdjust="spacingAndGlyphs" stroke="#a2a2a2" stroke-width="0.3">買い</text></svg>
<div class="t" style="left:51px;top:197.2px;font-size:6.2px;color:#181818;-webkit-text-stroke:.18px #181818;">50,000</div>
<div class="t" style="left:24.4px;top:204.6px;font-size:6.5px;color:#1c1808;width:40px;text-align:center;-webkit-text-stroke:.2px #1c1808;">-60,000</div>
<div class="t" style="left:74.6px;top:204.6px;font-size:6.2px;color:#5a4c1c;">--</div>
<div class="tile" style="left:120.2px;top:163.6px"><div class="tl"></div><div class="tn"></div><div class="tc"></div><div class="ty"></div><div class="tb"></div><div class="tb2"></div><div class="tv"></div><div class="bs"></div><div class="bb"></div><div class="tw"></div><div class="ty2"></div></div>
<div class="t" style="left:124.4px;top:164.3px;font-size:5.4px;color:#e8f0fc;letter-spacing:-.32px;">EUR/TRY</div>
<svg style="left:223.6px;top:165.8px" width="6" height="5" viewBox="0 0 6 5"><path d="M1 0.8 L5 4.2 M5 0.8 L1 4.2" stroke="#2c2c2c" stroke-width=".95"/></svg>
<svg style="left:121.8px;top:171.1px;overflow:hidden" width="10" height="7" viewBox="0 0 10 7"><rect width="10" height="7" fill="#3c78c8"/><circle cx="5" cy="3.5" r="2" fill="none" stroke="#d8c850" stroke-width=".6" stroke-dasharray=".6 .7"/><rect y="4.8" width="10" height="2.2" fill="#2c66b8" opacity=".5"/></svg>
<svg style="left:222.7px;top:171.1px;overflow:hidden" width="10" height="7" viewBox="0 0 10 7"><rect width="10" height="7" fill="#e03028"/><circle cx="4" cy="3.5" r="1.7" fill="#fff"/><circle cx="4.6" cy="3.5" r="1.35" fill="#e03028"/><rect y="5.4" width="10" height="1.6" fill="#c42018"/></svg>
<div class="t" style="left:138px;top:171.6px;font-size:5.85px;color:#1c1808;-webkit-text-stroke:.14px #1c1808;">L 2.81414</div>
<div class="t" style="left:176.2px;top:171.6px;font-size:6.1px;color:#2a2410;">-</div>
<div class="t" style="left:190px;top:171.6px;font-size:5.85px;color:#1c1808;-webkit-text-stroke:.14px #1c1808;">H 2.88558</div>
<div class="t" style="left:124.7px;top:178.8px;font-size:6.6px;color:#e6eeff;-webkit-text-stroke:.15px #e6eeff;">0.0</div>
<div class="t" style="left:221.7px;top:178.8px;font-size:6.6px;color:#e6eeff;-webkit-text-stroke:.15px #e6eeff;">0.0</div>
<svg style="left:125.8px;top:200.4px" width="13" height="9.8"><text x="0" y="7.8" font-size="7.8" fill="#a2a2a2" font-weight="normal" textLength="13" lengthAdjust="spacingAndGlyphs" stroke="#a2a2a2" stroke-width="0.3">売り</text></svg>
<svg style="left:213.8px;top:200.4px" width="13" height="9.8"><text x="0" y="7.8" font-size="7.8" fill="#a2a2a2" font-weight="normal" textLength="13" lengthAdjust="spacingAndGlyphs" stroke="#a2a2a2" stroke-width="0.3">買い</text></svg>
<div class="t" style="left:167.2px;top:197.2px;font-size:6.2px;color:#181818;-webkit-text-stroke:.18px #181818;">50,000</div>
<div class="t" style="left:140.6px;top:204.6px;font-size:6.5px;color:#1c1808;width:40px;text-align:center;-webkit-text-stroke:.2px #1c1808;">-100,000</div>
<div class="t" style="left:190.8px;top:204.6px;font-size:6.2px;color:#5a4c1c;">--</div>
<div class="a" style="left:820.6px;top:44.8px;width:2.6px;height:351.6px;background:#bcd2f4"></div>
<div class="a" style="left:239.6px;top:44.8px;width:2px;height:351.6px;background:#dbe8fb"></div>
<div class="a" style="left:241.5px;top:44px;width:579.3px;height:352.5px;background:#e6f1fd;border:1.4px solid #2f66b8;border-top:0;border-bottom:1.7px solid #2460b4"></div>
<div class="capA" style="left:242.8px;top:44px;width:576.7px;height:12.5px"></div>
<div class="a" style="left:242.8px;top:56.5px;width:576.7px;height:1.3px;background:#dfeafa"></div>
<div class="capA" style="left:242.8px;top:57.8px;width:576.7px;height:10.6px"></div>
<svg style="left:245px;top:46.4px" width="19.5" height="8.6"><text x="0" y="6.6" font-size="6.6" fill="#0c1424" font-weight="normal" textLength="19.5" lengthAdjust="spacingAndGlyphs" stroke="#0c1424" stroke-width="0.22">チャート</text></svg>
<svg style="left:244.6px;top:59.1px" width="113.8" height="8.5" font-size="6.5" fill="#0a1020" font-weight="normal" stroke="#0a1020" stroke-width="0.2" xml:space="preserve"><text x="0.00" y="6.5" textLength="34.75" lengthAdjust="spacingAndGlyphs">EUR/TRY&#160;-&#160;1&#160;</text><text x="34.75" y="6.5" textLength="12.33" lengthAdjust="spacingAndGlyphs">当日</text><text x="47.08" y="6.5" textLength="7.95" lengthAdjust="spacingAndGlyphs">NY</text><text x="55.03" y="6.5" textLength="12.33" lengthAdjust="spacingAndGlyphs">夕刻</text><text x="67.35" y="6.5" textLength="3.18" lengthAdjust="spacingAndGlyphs">5</text><text x="70.53" y="6.5" textLength="28.35" lengthAdjust="spacingAndGlyphs">時まで有効</text><text x="98.88" y="6.5" textLength="1.59" lengthAdjust="spacingAndGlyphs">&#160;</text><text x="100.47" y="6.5" textLength="12.33" lengthAdjust="spacingAndGlyphs">有効</text></svg>
<div class="a" style="left:773.2px;top:46.6px;width:7.6px;height:7.6px;background:linear-gradient(180deg,#e8eef6,#b8c6dc);border:.6px solid #8a9ab4;border-radius:1px;opacity:.8"></div>
<div class="a" style="left:782.6px;top:46.6px;width:7.6px;height:7.6px;background:linear-gradient(180deg,#e8eef6,#b8c6dc);border:.6px solid #8a9ab4;border-radius:1px;opacity:.8"></div>
<div class="a" style="left:792px;top:46.6px;width:7.6px;height:7.6px;background:linear-gradient(180deg,#e8eef6,#b8c6dc);border:.6px solid #8a9ab4;border-radius:1px;opacity:.8"></div>
<div class="a" style="left:801.2px;top:46.6px;width:7.6px;height:7.6px;background:linear-gradient(180deg,#e8eef6,#b8c6dc);border:.6px solid #8a9ab4;border-radius:1px;opacity:.8"></div>
<svg style="left:773.2px;top:46.6px" width="36" height="8" viewBox="0 0 36 8"><path d="M3.8 1.6 V6.2 M1.6 3.9 H6" stroke="#5a6470" stroke-width=".7"/><path d="M11.4 6 H15 M13.2 2 V6 M12 3.2 L13.2 2 L14.4 3.2" stroke="#5a6470" stroke-width=".7" fill="none"/><path d="M20.4 2.2 H24.2 V6 M20.6 5.8 L24 2.4" stroke="#5a6470" stroke-width=".7" fill="none"/><path d="M28.6 1.4 L33.6 6.4 L33.6 1.4Z" fill="#fff"/><path d="M28.6 1.4 L33.6 6.4 L28.6 6.4Z" fill="#555"/></svg>
<svg style="left:811px;top:47.6px" width="6" height="6" viewBox="0 0 6 6"><path d="M0.8 0.8 L5.2 5.2 M5.2 0.8 L0.8 5.2" stroke="#0c1830" stroke-width="1"/></svg>
<div class="a" style="left:243.5px;top:68.4px;width:575px;height:311.1px;background:#f4f4f4"></div>
<div class="t" style="left:712.8px;top:71.7px;font-size:5.8px;color:#333;">7:00:00</div>
<div class="t" style="left:739px;top:71.7px;font-size:5.8px;color:#333;">Bid: 0.00000</div>
<div class="t" style="left:778px;top:71.7px;font-size:5.8px;color:#333;">Offer: 0.00000</div>
<svg style="left:0;top:0" width="1024" height="555" viewBox="0 0 1024 555"><g stroke="#8c5c8e" stroke-width="1.25" stroke-dasharray="2 1.18" fill="none" opacity=".8"><path d="M248.5 97.63 H793.5"/><path d="M248.5 112.76 H793.5"/><path d="M248.5 127.89 H793.5"/><path d="M248.5 143.02 H793.5"/><path d="M248.5 158.15 H793.5"/><path d="M248.5 173.28 H793.5"/><path d="M248.5 188.41 H793.5"/><path d="M248.5 203.54 H793.5"/><path d="M248.5 218.67 H793.5"/><path d="M248.5 233.80 H793.5"/><path d="M248.5 248.93 H793.5"/><path d="M248.5 264.06 H793.5"/><path d="M248.5 279.19 H793.5"/><path d="M248.5 294.32 H793.5"/><path d="M248.5 309.45 H793.5"/><path d="M248.5 324.58 H793.5"/><path d="M248.5 339.71 H793.5"/></g><g stroke="#6c2c70" stroke-width="1" stroke-dasharray="2.7 2.64" fill="none" opacity=".9"><path d="M264.60 85.2 V354.7"/><path d="M316.50 85.2 V354.7"/><path d="M368.40 85.2 V354.7"/><path d="M420.40 85.2 V354.7"/><path d="M472.30 85.2 V354.7"/><path d="M524.20 85.2 V354.7"/><path d="M576.20 85.2 V354.7"/><path d="M628.00 85.2 V354.7"/><path d="M674.80 85.2 V354.7"/><path d="M726.70 85.2 V354.7"/><path d="M778.80 85.2 V354.7"/></g><path d="M248.5 82.5 V354.7" stroke="#555" stroke-width="1.2"/><path d="M248.5 82.5 H793.5" stroke="#555" stroke-width="1.2"/><path d="M793.5 82.5 V354.7" stroke="#8a5a8a" stroke-width="1"/><path d="M248.5 354.7 H793.5" stroke="#8a4a88" stroke-width="1"/><rect x="790.5" y="82.5" width="3" height="2.4" fill="#401848"/><path d="M249.0 180.8 V192.8M251.8 174.9 V190.9M262.1 203.5 V214.8M264.9 187.1 V208.6M272.7 195.3 V210.4M275.5 189.6 V204.8M278.0 178.3 V202.2M288.2 207.9 V212.3M293.5 193.4 V225.6M299.0 187.1 V196.6M301.4 165.8 V188.6M304.2 164.0 V177.8M309.0 159.9 V180.3M316.9 162.1 V175.3M325.0 172.2 V178.5M327.5 170.3 V177.2M329.9 164.6 V174.7M332.6 163.3 V171.5M337.9 172.2 V177.2M348.5 173.0 V182.2M353.8 178.5 V186.0M361.3 172.8 V193.1M374.5 217.4 V226.2M379.4 218.1 V231.6M382.1 209.3 V222.4M384.8 194.9 V217.4M387.4 187.7 V201.9M395.5 185.4 V205.9M398.2 172.3 V186.5M400.2 170.3 V180.4M405.5 181.1 V196.6M408.3 174.3 V187.8M416.3 162.2 V189.2M424.0 173.0 V187.8M439.6 195.3 V209.5M447.6 198.8 V213.0M457.9 228.5 V238.0M460.6 205.5 V235.3M465.9 204.9 V215.7M468.6 181.9 V209.6M476.0 189.3 V201.5M478.7 183.9 V200.8M484.0 177.2 V196.1M491.9 180.5 V200.8M496.7 168.2 V200.7M501.9 181.1 V189.9M512.6 182.4 V197.3M517.9 177.0 V187.8M520.3 176.3 V187.8M522.8 175.7 V186.5M528.0 158.8 V191.9M536.1 186.5 V200.7M549.0 205.8 V220.0M559.6 240.3 V259.9M562.5 235.5 V249.7M567.2 228.8 V241.6M570.0 224.1 V247.0M572.6 215.9 V233.5M578.0 221.3 V230.8M590.9 240.9 V249.7M593.6 224.7 V245.0M601.4 248.4 V265.3M612.0 254.5 V265.3M617.0 253.1 V259.2M622.1 245.0 V263.2M624.8 240.9 V261.9M627.5 232.8 V249.1M630.0 225.4 V239.6M632.8 220.7 V235.5M635.5 214.6 V228.1M637.9 189.0 V221.5M640.0 121.8 V197.8M642.8 95.4 V162.7M653.6 205.3 V218.8M658.8 208.7 V218.8M666.3 197.8 V226.2M684.9 277.0 V297.3M697.9 295.3 V310.8M700.6 278.4 V308.8M705.9 275.0 V293.2M713.3 312.2 V341.7M716.0 295.3 V328.6M718.7 289.2 V310.1M721.3 269.9 V301.4M724.1 252.3 V277.0M732.1 224.7 V266.0M734.4 228.1 V247.7M739.5 213.9 V241.0M742.1 213.2 V236.9M744.8 208.5 V227.4M755.4 230.2 V247.5M760.3 233.3 V245.5M765.5 226.0 V242.6M770.9 216.0 V239.5M776.2 211.0 V236.0M778.9 206.9 V236.5M781.0 205.5 V229.1M783.8 202.8 V216.8M786.5 175.8 V215.5" stroke="#5aa878" stroke-width=".9" fill="none"/><path d="M254.6 170.1 V194.7M257.4 187.1 V207.3M259.6 200.3 V213.0M267.4 185.8 V202.2M270.0 199.7 V210.4M280.7 175.1 V187.1M283.1 183.3 V210.4M285.7 190.3 V213.6M290.9 206.0 V223.7M296.4 187.1 V207.3M306.5 163.3 V182.2M311.6 157.7 V168.4M314.4 160.2 V172.2M319.6 160.8 V170.3M322.4 168.4 V179.1M335.2 162.4 V176.6M340.4 170.9 V175.3M343.0 173.0 V180.3M345.8 175.9 V182.2M351.1 175.9 V184.8M356.1 178.9 V185.7M358.8 182.3 V194.5M364.0 173.5 V192.4M366.7 184.3 V195.4M369.2 192.4 V212.0M371.9 210.0 V226.9M376.9 220.1 V228.9M390.1 182.3 V199.9M392.8 191.8 V198.5M402.8 156.1 V187.8M411.0 176.3 V183.8M413.6 177.0 V187.8M419.0 166.2 V179.1M421.4 176.3 V187.2M426.5 171.6 V185.1M429.1 173.7 V186.5M431.8 183.1 V191.2M434.4 186.5 V203.4M436.9 200.0 V212.2M442.4 201.3 V210.8M444.9 206.8 V213.5M450.1 199.5 V213.7M452.5 207.6 V233.9M455.2 225.8 V238.7M463.2 196.1 V215.7M471.1 173.1 V205.5M473.4 188.7 V201.5M481.4 183.2 V199.5M486.5 183.2 V189.3M489.2 185.3 V198.8M494.4 180.5 V192.0M499.4 176.3 V192.6M504.6 177.0 V191.9M507.4 182.4 V193.9M510.1 177.0 V206.1M515.3 170.9 V188.5M525.2 173.0 V190.5M530.9 160.1 V179.1M533.6 171.6 V195.9M538.8 183.8 V205.4M541.5 198.0 V210.1M543.8 206.1 V217.6M546.5 208.8 V222.3M551.7 211.9 V229.5M554.4 225.4 V240.3M557.1 232.8 V251.1M565.0 234.9 V247.7M575.3 222.0 V231.5M580.7 220.0 V234.9M583.4 229.5 V236.9M586.1 233.5 V245.0M588.7 230.8 V249.7M596.1 226.1 V244.3M598.7 238.9 V265.9M604.1 245.7 V256.5M606.7 248.4 V257.2M609.4 250.4 V263.9M614.6 247.7 V257.8M619.5 253.1 V261.9M645.6 131.9 V189.0M648.3 176.9 V208.6M651.0 195.4 V219.5M656.1 208.7 V219.5M661.5 209.3 V220.8M663.7 209.3 V226.9M669.0 211.3 V219.5M671.7 208.7 V226.9M674.4 221.0 V253.0M676.9 241.5 V258.4M679.6 253.6 V267.2M682.4 263.8 V287.8M687.2 278.4 V292.6M689.9 289.2 V304.0M692.5 280.4 V302.7M695.0 286.5 V329.8M703.2 273.9 V288.0M708.4 267.8 V334.1M710.7 324.0 V350.7M726.7 249.0 V270.0M729.2 253.1 V270.0M736.8 228.1 V248.4M747.5 207.2 V226.8M750.0 215.9 V235.5M752.7 226.2 V245.5M757.7 227.0 V245.5M762.9 231.0 V248.3M768.2 223.3 V241.5M773.6 211.8 V235.9M789.1 181.9 V225.0" stroke="#f06a6a" stroke-width=".9" fill="none"/><path d="M249.0 184.0 V190.9M251.8 175.1 V188.4M262.1 207.3 V209.2M264.9 193.4 V207.3M272.7 196.6 V209.2M275.5 192.8 V196.6M278.0 182.1 V192.8M288.2 208.6 V211.7M293.5 194.7 V221.8M299.0 188.4 V195.3M301.4 167.1 V187.3M304.2 164.6 V167.1M309.0 160.8 V178.5M316.9 163.3 V167.7M325.0 172.8 V176.6M327.5 172.2 V174.1M329.9 165.2 V173.4M332.6 164.0 V165.2M337.9 172.8 V174.7M348.5 176.6 V181.6M353.8 180.3 V184.1M361.3 174.2 V192.4M374.5 218.1 V224.9M379.4 220.8 V227.6M382.1 210.0 V220.8M384.8 198.5 V210.7M387.4 191.8 V199.2M395.5 186.3 V196.5M398.2 175.7 V185.1M400.2 171.6 V179.1M405.5 185.8 V187.2M408.3 177.0 V185.8M416.3 170.3 V187.2M424.0 174.3 V184.9M439.6 204.1 V206.1M447.6 202.2 V210.9M457.9 231.9 V233.9M460.6 207.6 V231.9M465.9 205.5 V213.7M468.6 182.6 V205.5M476.0 196.8 V199.5M478.7 185.9 V196.1M484.0 184.6 V185.9M491.9 182.6 V198.1M496.7 178.4 V190.5M501.9 184.5 V185.8M512.6 183.8 V191.2M517.9 181.8 V184.5M520.3 178.4 V181.8M522.8 176.3 V179.1M528.0 164.2 V186.5M536.1 189.9 V193.9M549.0 212.6 V214.6M559.6 241.6 V249.1M562.5 240.9 V242.3M567.2 232.2 V240.9M570.0 230.8 V232.8M572.6 225.4 V231.5M578.0 224.1 V230.1M590.9 242.3 V247.0M593.6 232.2 V243.0M601.4 249.1 V263.9M612.0 255.1 V261.9M617.0 255.1 V257.2M622.1 253.8 V259.2M624.8 247.7 V253.8M627.5 234.9 V248.4M630.0 230.1 V235.5M632.8 221.3 V230.1M635.5 215.9 V220.0M637.9 193.8 V216.1M640.0 138.6 V189.0M642.8 137.8 V138.8M653.6 214.1 V214.9M658.8 214.7 V215.5M666.3 213.4 V222.2M684.9 283.1 V285.8M697.9 299.3 V300.7M700.6 286.5 V300.7M705.9 276.0 V287.2M713.3 326.5 V328.3M716.0 299.3 V326.4M718.7 298.0 V299.3M721.3 271.2 V297.3M724.1 259.8 V271.9M732.1 234.9 V259.9M734.4 233.5 V234.9M739.5 230.8 V234.2M742.1 217.3 V230.8M744.8 212.6 V217.3M755.4 231.6 V239.9M760.3 237.0 V242.0M765.5 230.2 V236.0M770.9 216.5 V237.0M776.2 228.0 V229.8M778.9 224.0 V230.9M781.0 212.4 V223.8M783.8 210.3 V212.1M786.5 185.9 V209.6" stroke="#1f8a50" stroke-width="1.7" fill="none"/><path d="M254.6 175.8 V191.5M257.4 192.2 V206.0M259.6 201.0 V211.1M267.4 193.4 V201.0M270.0 201.0 V209.2M280.7 182.1 V186.5M283.1 186.5 V193.4M285.7 193.4 V211.7M290.9 210.4 V222.4M296.4 187.7 V196.6M306.5 164.6 V179.1M311.6 161.4 V165.8M314.4 165.8 V168.4M319.6 164.0 V169.6M322.4 169.6 V175.9M335.2 164.6 V174.7M340.4 172.2 V174.7M343.0 174.1 V176.6M345.8 176.6 V180.3M351.1 176.6 V183.5M356.1 183.0 V185.0M358.8 183.7 V193.1M364.0 174.6 V191.8M366.7 185.7 V193.8M369.2 193.8 V210.7M371.9 211.1 V226.2M376.9 220.8 V225.5M390.1 191.8 V193.8M392.8 194.9 V197.2M402.8 175.0 V186.5M411.0 177.0 V182.4M413.6 182.4 V187.2M419.0 168.9 V177.7M421.4 177.0 V184.5M426.5 174.3 V176.3M429.1 174.3 V183.8M431.8 185.8 V188.5M434.4 188.5 V202.7M436.9 203.4 V207.4M442.4 204.7 V208.8M444.9 208.8 V210.8M450.1 202.2 V210.9M452.5 210.9 V232.6M455.2 232.6 V235.9M463.2 208.2 V213.7M471.1 187.3 V194.1M473.4 193.4 V198.8M481.4 185.9 V192.7M486.5 185.0 V188.0M489.2 187.3 V198.1M494.4 182.6 V191.3M499.4 178.4 V185.8M504.6 184.5 V187.8M507.4 187.8 V189.9M510.1 183.8 V191.2M515.3 183.8 V184.9M525.2 176.3 V186.5M530.9 164.2 V173.0M533.6 173.7 V193.9M538.8 189.9 V200.0M541.5 200.0 V208.8M543.8 208.8 V214.9M546.5 214.0 V218.0M551.7 213.2 V226.8M554.4 226.8 V234.2M557.1 234.2 V249.7M565.0 235.5 V242.3M575.3 226.1 V229.5M580.7 223.4 V232.8M583.4 232.2 V233.5M586.1 234.2 V238.2M588.7 234.2 V247.0M596.1 232.2 V243.0M598.7 242.3 V262.6M604.1 248.4 V252.4M606.7 251.8 V255.8M609.4 255.8 V261.9M614.6 252.4 V256.5M619.5 255.8 V259.2M645.6 138.0 V181.6M648.3 181.6 V199.9M651.0 199.9 V216.8M656.1 214.1 V216.1M661.5 210.0 V219.5M663.7 219.5 V222.4M669.0 213.4 V216.1M671.7 218.8 V224.9M674.4 223.9 V244.9M676.9 244.2 V254.3M679.6 256.4 V265.1M682.4 265.1 V285.8M687.2 281.8 V290.5M689.9 291.2 V300.0M692.5 299.3 V300.7M695.0 299.6 V300.6M703.2 286.5 V287.8M708.4 276.2 V327.9M710.7 328.0 V334.5M726.7 256.5 V258.5M729.2 258.5 V259.9M736.8 234.2 V235.5M747.5 212.6 V221.4M750.0 221.4 V234.9M752.7 232.7 V239.5M757.7 231.8 V242.0M762.9 236.2 V237.6M768.2 230.2 V236.7M773.6 217.0 V229.6M789.1 185.9 V204.9" stroke="#f21a1a" stroke-width="1.7" fill="none"/><path d="M248.5 205.2 H793.5" stroke="#4a4a78" stroke-width="1"/><path d="M248.5 219.2 H793.5" stroke="#3a3a3a" stroke-width=".85"/></svg>
<div class="t" style="left:797.5px;top:78.9px;font-size:5.7px;color:#333;">3.05000</div>
<div class="t" style="left:797.5px;top:94.03px;font-size:5.7px;color:#333;">3.02500</div>
<div class="t" style="left:797.5px;top:109.16px;font-size:5.7px;color:#333;">3.00000</div>
<div class="t" style="left:797.5px;top:124.29px;font-size:5.7px;color:#333;">2.97500</div>
<div class="t" style="left:797.5px;top:139.42px;font-size:5.7px;color:#333;">2.95000</div>
<div class="t" style="left:797.5px;top:154.55px;font-size:5.7px;color:#333;">2.92500</div>
<div class="t" style="left:797.5px;top:169.68px;font-size:5.7px;color:#333;">2.90000</div>
<div class="t" style="left:797.5px;top:184.81px;font-size:5.7px;color:#333;">2.87500</div>
<div class="t" style="left:797.5px;top:215.07px;font-size:5.7px;color:#333;">2.82500</div>
<div class="t" style="left:797.5px;top:230.2px;font-size:5.7px;color:#333;">2.80000</div>
<div class="t" style="left:797.5px;top:245.33px;font-size:5.7px;color:#333;">2.77500</div>
<div class="t" style="left:797.5px;top:260.46px;font-size:5.7px;color:#333;">2.75000</div>
<div class="t" style="left:797.5px;top:275.59px;font-size:5.7px;color:#333;">2.72500</div>
<div class="t" style="left:797.5px;top:290.72px;font-size:5.7px;color:#333;">2.70000</div>
<div class="t" style="left:797.5px;top:305.85px;font-size:5.7px;color:#333;">2.67500</div>
<div class="t" style="left:797.5px;top:320.98px;font-size:5.7px;color:#333;">2.65000</div>
<div class="t" style="left:797.5px;top:336.11px;font-size:5.7px;color:#333;">2.62500</div>
<div class="t" style="left:797.5px;top:351.24px;font-size:5.7px;color:#333;">2.60000</div>
<div class="a" style="left:794px;top:200px;width:24.6px;height:8.2px;background:#fffafa;border:1.3px solid #ff9a9a;border-radius:1.4px"></div>
<div class="t" style="left:796.6px;top:200px;font-size:5.9px;color:#ff4a4a;">2.84555</div>
<svg style="left:249.5px;top:212px" width="16" height="7.6"><text x="0" y="5.6" font-size="5.6" fill="#333" font-weight="normal" textLength="16" lengthAdjust="spacingAndGlyphs" stroke="#333" stroke-width="0.22">ショート</text></svg>
<div class="t" style="left:270px;top:212.2px;font-size:5.6px;color:#333;">100,000@ 2.823262</div>
<svg style="left:253.2px;top:346.4px" width="58.5" height="8.2"><text x="0" y="6.2" font-size="6.2" fill="#6a2a68" font-weight="normal" textLength="58.5" lengthAdjust="spacingAndGlyphs" stroke="#6a2a68" stroke-width="0.15">価格表示は参考値です。</text></svg>
<div class="t" style="left:250.6px;top:354.9px;font-size:5.6px;color:#2a2a2a;">2014/05/26</div>
<div class="t" style="left:302.5px;top:354.9px;font-size:5.6px;color:#2a2a2a;">2014/06/23</div>
<div class="t" style="left:354.4px;top:354.9px;font-size:5.6px;color:#2a2a2a;">2014/07/21</div>
<div class="t" style="left:406.4px;top:354.9px;font-size:5.6px;color:#2a2a2a;">2014/08/18</div>
<div class="t" style="left:458.3px;top:354.9px;font-size:5.6px;color:#2a2a2a;">2014/09/15</div>
<div class="t" style="left:510.2px;top:354.9px;font-size:5.6px;color:#2a2a2a;">2014/10/13</div>
<div class="t" style="left:562.2px;top:354.9px;font-size:5.6px;color:#2a2a2a;">2014/11/10</div>
<div class="t" style="left:614px;top:354.9px;font-size:5.6px;color:#2a2a2a;">2014/12/08</div>
<div class="t" style="left:660.8px;top:354.9px;font-size:5.6px;color:#2a2a2a;">2015/01/05</div>
<div class="t" style="left:712.7px;top:354.9px;font-size:5.6px;color:#2a2a2a;">2015/02/02</div>
<div class="t" style="left:765.3px;top:354.9px;font-size:5.6px;color:#2a2a2a;">2015/03/02</div>
<svg style="left:264px;top:360.8px" width="27.0" height="7.6" font-size="5.6" fill="#2a2a2a" font-weight="normal" stroke="#2a2a2a" stroke-width="0" xml:space="preserve"><text x="0.00" y="5.6">2014</text><text x="12.46" y="5.6" textLength="4.44" lengthAdjust="spacingAndGlyphs">年</text><text x="16.89" y="5.6">&#160;6</text><text x="21.56" y="5.6" textLength="4.44" lengthAdjust="spacingAndGlyphs">月</text></svg>
<svg style="left:319px;top:360.8px" width="27.0" height="7.6" font-size="5.6" fill="#2a2a2a" font-weight="normal" stroke="#2a2a2a" stroke-width="0" xml:space="preserve"><text x="0.00" y="5.6">2014</text><text x="12.46" y="5.6" textLength="4.44" lengthAdjust="spacingAndGlyphs">年</text><text x="16.89" y="5.6">&#160;7</text><text x="21.56" y="5.6" textLength="4.44" lengthAdjust="spacingAndGlyphs">月</text></svg>
<svg style="left:379px;top:360.8px" width="27.0" height="7.6" font-size="5.6" fill="#2a2a2a" font-weight="normal" stroke="#2a2a2a" stroke-width="0" xml:space="preserve"><text x="0.00" y="5.6">2014</text><text x="12.46" y="5.6" textLength="4.44" lengthAdjust="spacingAndGlyphs">年</text><text x="16.89" y="5.6">&#160;8</text><text x="21.56" y="5.6" textLength="4.44" lengthAdjust="spacingAndGlyphs">月</text></svg>
<svg style="left:433px;top:360.8px" width="27.0" height="7.6" font-size="5.6" fill="#2a2a2a" font-weight="normal" stroke="#2a2a2a" stroke-width="0" xml:space="preserve"><text x="0.00" y="5.6">2014</text><text x="12.46" y="5.6" textLength="4.44" lengthAdjust="spacingAndGlyphs">年</text><text x="16.89" y="5.6">&#160;9</text><text x="21.56" y="5.6" textLength="4.44" lengthAdjust="spacingAndGlyphs">月</text></svg>
<svg style="left:488.75px;top:360.8px" width="29.5" height="7.6" font-size="5.6" fill="#2a2a2a" font-weight="normal" stroke="#2a2a2a" stroke-width="0" xml:space="preserve"><text x="0.00" y="5.6">2014</text><text x="12.46" y="5.6" textLength="4.13" lengthAdjust="spacingAndGlyphs">年</text><text x="16.59" y="5.6">&#160;10</text><text x="24.37" y="5.6" textLength="4.13" lengthAdjust="spacingAndGlyphs">月</text></svg>
<svg style="left:546.75px;top:360.8px" width="29.5" height="7.6" font-size="5.6" fill="#2a2a2a" font-weight="normal" stroke="#2a2a2a" stroke-width="0" xml:space="preserve"><text x="0.00" y="5.6">2014</text><text x="12.46" y="5.6" textLength="4.34" lengthAdjust="spacingAndGlyphs">年</text><text x="16.79" y="5.6">&#160;11</text><text x="24.16" y="5.6" textLength="4.34" lengthAdjust="spacingAndGlyphs">月</text></svg>
<svg style="left:600.75px;top:360.8px" width="29.5" height="7.6" font-size="5.6" fill="#2a2a2a" font-weight="normal" stroke="#2a2a2a" stroke-width="0" xml:space="preserve"><text x="0.00" y="5.6">2014</text><text x="12.46" y="5.6" textLength="4.13" lengthAdjust="spacingAndGlyphs">年</text><text x="16.59" y="5.6">&#160;12</text><text x="24.37" y="5.6" textLength="4.13" lengthAdjust="spacingAndGlyphs">月</text></svg>
<svg style="left:659px;top:360.8px" width="27.0" height="7.6" font-size="5.6" fill="#2a2a2a" font-weight="normal" stroke="#2a2a2a" stroke-width="0" xml:space="preserve"><text x="0.00" y="5.6">2015</text><text x="12.46" y="5.6" textLength="4.44" lengthAdjust="spacingAndGlyphs">年</text><text x="16.89" y="5.6">&#160;1</text><text x="21.56" y="5.6" textLength="4.44" lengthAdjust="spacingAndGlyphs">月</text></svg>
<svg style="left:714px;top:360.8px" width="27.0" height="7.6" font-size="5.6" fill="#2a2a2a" font-weight="normal" stroke="#2a2a2a" stroke-width="0" xml:space="preserve"><text x="0.00" y="5.6">2015</text><text x="12.46" y="5.6" textLength="4.44" lengthAdjust="spacingAndGlyphs">年</text><text x="16.89" y="5.6">&#160;2</text><text x="21.56" y="5.6" textLength="4.44" lengthAdjust="spacingAndGlyphs">月</text></svg>
<svg style="left:766px;top:360.8px" width="27.0" height="7.6" font-size="5.6" fill="#2a2a2a" font-weight="normal" stroke="#2a2a2a" stroke-width="0" xml:space="preserve"><text x="0.00" y="5.6">2015</text><text x="12.46" y="5.6" textLength="4.44" lengthAdjust="spacingAndGlyphs">年</text><text x="16.89" y="5.6">&#160;3</text><text x="21.56" y="5.6" textLength="4.44" lengthAdjust="spacingAndGlyphs">月</text></svg>
<div class="a" style="left:243.5px;top:371.5px;width:575.5px;height:9px;background:#f0f0f0"></div>
<div class="a" style="left:255px;top:372.2px;width:555px;height:8.4px;background:linear-gradient(180deg,#ededed,#dadada 45%,#cbcbcb 55%,#d6d6d6);border:.5px solid #c4c4c4;border-radius:2px"></div>
<svg style="left:246px;top:374px" width="4" height="5" viewBox="0 0 4 5"><path d="M3.2 0.4 L0.6 2.5 L3.2 4.6Z" fill="#444"/></svg>
<svg style="left:812.5px;top:374px" width="4" height="5" viewBox="0 0 4 5"><path d="M0.8 0.4 L3.4 2.5 L0.8 4.6Z" fill="#444"/></svg>
<div class="t" style="left:530px;top:373px;font-size:5px;color:#777;">ııı</div>
<div class="a" style="left:243.5px;top:381.5px;width:575.5px;height:13.5px;background:#e6f1fd;border-top:1px solid #6a94d0"></div>
<div class="a" style="left:245.5px;top:382.4px;width:104.5px;height:10.8px;background:linear-gradient(180deg,#a6c4f0,#bcd4f5);border:1px solid #5a86cc"></div>
<div class="a" style="left:350px;top:381.5px;width:119px;height:12.6px;background:#e9f3fe;border:1px solid #6a94d0;border-top:0"></div>
<svg style="left:247.5px;top:384.1px" width="101.0" height="8.3" font-size="6.3" fill="#1a2a5a" font-weight="normal" stroke="#1a2a5a" stroke-width="0.15" xml:space="preserve"><text x="0.00" y="6.3" textLength="33.68" lengthAdjust="spacingAndGlyphs">USD/TRY&#160;-&#160;1&#160;</text><text x="33.68" y="6.3" textLength="12.91" lengthAdjust="spacingAndGlyphs">当日</text><text x="46.60" y="6.3" textLength="7.70" lengthAdjust="spacingAndGlyphs">NY</text><text x="54.30" y="6.3" textLength="12.91" lengthAdjust="spacingAndGlyphs">夕刻</text><text x="67.21" y="6.3" textLength="3.08" lengthAdjust="spacingAndGlyphs">5</text><text x="70.30" y="6.3" textLength="29.70" lengthAdjust="spacingAndGlyphs">時まで有効</text></svg>
<svg style="left:352.5px;top:384.5px" width="114.0" height="8.3" font-size="6.3" fill="#222" font-weight="normal" stroke="#222" stroke-width="0.15" xml:space="preserve"><text x="0.00" y="6.3" textLength="33.68" lengthAdjust="spacingAndGlyphs">EUR/TRY&#160;-&#160;1&#160;</text><text x="33.68" y="6.3" textLength="12.64" lengthAdjust="spacingAndGlyphs">当日</text><text x="46.32" y="6.3" textLength="7.70" lengthAdjust="spacingAndGlyphs">NY</text><text x="54.03" y="6.3" textLength="12.64" lengthAdjust="spacingAndGlyphs">夕刻</text><text x="66.67" y="6.3" textLength="3.08" lengthAdjust="spacingAndGlyphs">5</text><text x="69.75" y="6.3" textLength="29.07" lengthAdjust="spacingAndGlyphs">時まで有効</text><text x="98.82" y="6.3" textLength="1.54" lengthAdjust="spacingAndGlyphs">&#160;</text><text x="100.36" y="6.3" textLength="12.64" lengthAdjust="spacingAndGlyphs">有効</text></svg>
<div class="a" style="left:823px;top:44px;width:201px;height:137.2px;background:#cadcf7;border:1.4px solid #6f96d4;border-top:0;border-right:0;border-bottom:1px solid #5d88cc"></div>
<div class="cap" style="left:824px;top:44px;width:200px;height:12.5px"></div>
<svg style="left:826.5px;top:46.4px" width="31" height="8.6"><text x="0" y="6.6" font-size="6.6" fill="#16202c" font-weight="normal" textLength="31" lengthAdjust="spacingAndGlyphs" stroke="#16202c" stroke-width="0.22">速報ニュース</text></svg>
<svg style="left:1014.4px;top:47.2px" width="6" height="6" viewBox="0 0 6 6"><path d="M0.6 0.6 L5.4 5.4 M5.4 0.6 L0.6 5.4" stroke="#16202c" stroke-width=".95"/></svg>
<div class="a" style="left:824px;top:56.2px;width:189.5px;height:9.8px;background:linear-gradient(180deg,#fdf4cc,#fbe9a2 60%,#f9df86);border-top:1px solid #5a84c8;border-bottom:1px solid #4a78c0"></div>
<div class="a" style="left:832.3px;top:57.6px;width:1px;height:7.6px;background:#6b8ec8"></div>
<div class="a" style="left:883px;top:57.6px;width:1px;height:7.6px;background:#6b8ec8"></div>
<svg style="left:835px;top:57.2px" width="12.6" height="8.8"><text x="0" y="6.8" font-size="6.8" fill="#2a2410" font-weight="normal" textLength="12.6" lengthAdjust="spacingAndGlyphs" stroke="#2a2410" stroke-width="0.22">日付</text></svg>
<svg style="left:885.5px;top:57.2px" width="12.6" height="8.8"><text x="0" y="6.8" font-size="6.8" fill="#2a2410" font-weight="normal" textLength="12.6" lengthAdjust="spacingAndGlyphs" stroke="#2a2410" stroke-width="0.22">表題</text></svg>
<svg style="left:876px;top:60.4px" width="5" height="3" viewBox="0 0 5 3"><path d="M0.2 0.2 H4.8 L2.5 2.8Z" fill="#a8a8a0"/></svg>
<div class="a" style="left:824px;top:66px;width:189.5px;height:11.26px;background:#fddfb0;border-bottom:1.1px solid #5d88cc"></div>
<svg style="left:824.4px;top:66.8px" width="9.4" height="9" viewBox="0 0 8.5 8"><path d="M0.4 1.4 L6.6 0.4 L8.2 1.4 L7.2 6.6 L1.6 7.6 L0.6 6.4Z" fill="#b9bec5" stroke="#7c838c" stroke-width=".5"/><path d="M2.2 2.4 L6.8 1.6 L6.2 5.6 L2.6 6.2Z" fill="#f2f4f6"/><path d="M3.2 3 V5.4 M4.6 2.8 V5.2 M3.2 3 L4.6 5.2" stroke="#666" stroke-width=".6"/></svg>
<div class="t" style="left:834.6px;top:67.6px;font-size:6.5px;color:#2c2c2c;letter-spacing:-.17px;">2015/03/07 8:04</div>
<svg style="left:885.6px;top:66.7px" width="123.6" height="8.5" font-size="6.5" fill="#1c1c1c" font-weight="normal" stroke="#1c1c1c" stroke-width="0.12" xml:space="preserve"><text x="0.00" y="6.5">DJ-</text><text x="10.11" y="6.5" textLength="112.49" lengthAdjust="spacingAndGlyphs">【外国為替】ドル続伸、米雇用統計が好調で</text></svg>
<div class="a" style="left:824px;top:77.26px;width:189.5px;height:11.26px;background:#f4f4f5;border-bottom:1.1px solid #5d88cc"></div>
<svg style="left:824.4px;top:78.06px" width="9.4" height="9" viewBox="0 0 8.5 8"><path d="M0.4 1.4 L6.6 0.4 L8.2 1.4 L7.2 6.6 L1.6 7.6 L0.6 6.4Z" fill="#b9bec5" stroke="#7c838c" stroke-width=".5"/><path d="M2.2 2.4 L6.8 1.6 L6.2 5.6 L2.6 6.2Z" fill="#f2f4f6"/><path d="M3.2 3 V5.4 M4.6 2.8 V5.2 M3.2 3 L4.6 5.2" stroke="#666" stroke-width=".6"/></svg>
<div class="t" style="left:834.6px;top:78.86px;font-size:6.5px;color:#2c2c2c;letter-spacing:-.17px;">2015/03/07 0:45</div>
<svg style="left:885.6px;top:77.96px" width="127.0" height="8.5" font-size="6.5" fill="#1c1c1c" font-weight="normal" stroke="#1c1c1c" stroke-width="0.12" xml:space="preserve"><text x="0.00" y="6.5">DJ-</text><text x="10.11" y="6.5" textLength="3.60" lengthAdjust="spacingAndGlyphs">【</text><text x="13.71" y="6.5">FRB</text><text x="26.71" y="6.5" textLength="59.16" lengthAdjust="spacingAndGlyphs">ウォッチ】雇用統計好調、</text><text x="85.87" y="6.5">FOMC</text><text x="105.00" y="6.5" textLength="21.00" lengthAdjust="spacingAndGlyphs">声明文…</text></svg>
<div class="a" style="left:824px;top:88.52px;width:189.5px;height:11.26px;background:#f4f4f5;border-bottom:1.1px solid #5d88cc"></div>
<svg style="left:824.4px;top:89.32px" width="9.4" height="9" viewBox="0 0 8.5 8"><path d="M0.4 1.4 L6.6 0.4 L8.2 1.4 L7.2 6.6 L1.6 7.6 L0.6 6.4Z" fill="#b9bec5" stroke="#7c838c" stroke-width=".5"/><path d="M2.2 2.4 L6.8 1.6 L6.2 5.6 L2.6 6.2Z" fill="#f2f4f6"/><path d="M3.2 3 V5.4 M4.6 2.8 V5.2 M3.2 3 L4.6 5.2" stroke="#666" stroke-width=".6"/></svg>
<div class="t" style="left:834.6px;top:90.12px;font-size:6.5px;color:#2c2c2c;letter-spacing:-.17px;">2015/03/06 23:07</div>
<svg style="left:885.6px;top:89.22px" width="122.6" height="8.5" font-size="6.5" fill="#1c1c1c" font-weight="normal" stroke="#1c1c1c" stroke-width="0.12" xml:space="preserve"><text x="0.00" y="6.5">DJ-</text><text x="10.11" y="6.5" textLength="111.49" lengthAdjust="spacingAndGlyphs">【市場の声】ドル急伸、好調な米雇用統計で</text></svg>
<div class="a" style="left:824px;top:99.78px;width:189.5px;height:11.26px;background:#f4f4f5;border-bottom:1.1px solid #5d88cc"></div>
<svg style="left:824.4px;top:100.58px" width="9.4" height="9" viewBox="0 0 8.5 8"><path d="M0.4 1.4 L6.6 0.4 L8.2 1.4 L7.2 6.6 L1.6 7.6 L0.6 6.4Z" fill="#b9bec5" stroke="#7c838c" stroke-width=".5"/><path d="M2.2 2.4 L6.8 1.6 L6.2 5.6 L2.6 6.2Z" fill="#f2f4f6"/><path d="M3.2 3 V5.4 M4.6 2.8 V5.2 M3.2 3 L4.6 5.2" stroke="#666" stroke-width=".6"/></svg>
<div class="t" style="left:834.6px;top:101.38px;font-size:6.5px;color:#2c2c2c;letter-spacing:-.17px;">2015/03/06 21:52</div>
<svg style="left:885.6px;top:100.48px" width="125.5" height="8.5" font-size="6.5" fill="#1c1c1c" font-weight="normal" stroke="#1c1c1c" stroke-width="0.12" xml:space="preserve"><text x="0.00" y="6.5">DJ-</text><text x="10.11" y="6.5" textLength="114.39" lengthAdjust="spacingAndGlyphs">スイスフラン上限撤廃、今年の収支に影響も…</text></svg>
<div class="a" style="left:824px;top:111.04px;width:189.5px;height:11.26px;background:#f4f4f5;border-bottom:1.1px solid #5d88cc"></div>
<svg style="left:824.4px;top:111.84px" width="9.4" height="9" viewBox="0 0 8.5 8"><path d="M0.4 1.4 L6.6 0.4 L8.2 1.4 L7.2 6.6 L1.6 7.6 L0.6 6.4Z" fill="#b9bec5" stroke="#7c838c" stroke-width=".5"/><path d="M2.2 2.4 L6.8 1.6 L6.2 5.6 L2.6 6.2Z" fill="#f2f4f6"/><path d="M3.2 3 V5.4 M4.6 2.8 V5.2 M3.2 3 L4.6 5.2" stroke="#666" stroke-width=".6"/></svg>
<div class="t" style="left:834.6px;top:112.64px;font-size:6.5px;color:#2c2c2c;letter-spacing:-.17px;">2015/03/06 21:20</div>
<svg style="left:885.6px;top:111.74px" width="103.0" height="8.5" font-size="6.5" fill="#1c1c1c" font-weight="normal" stroke="#1c1c1c" stroke-width="0.12" xml:space="preserve"><text x="0.00" y="6.5">DJ-</text><text x="10.11" y="6.5" textLength="65.01" lengthAdjust="spacingAndGlyphs">フランス政府の財政赤字、</text><text x="75.12" y="6.5">1</text><text x="78.74" y="6.5" textLength="23.26" lengthAdjust="spacingAndGlyphs">月は縮小</text></svg>
<div class="a" style="left:824px;top:122.3px;width:189.5px;height:11.26px;background:#f4f4f5;border-bottom:1.1px solid #5d88cc"></div>
<svg style="left:824.4px;top:123.1px" width="9.4" height="9" viewBox="0 0 8.5 8"><path d="M0.4 1.4 L6.6 0.4 L8.2 1.4 L7.2 6.6 L1.6 7.6 L0.6 6.4Z" fill="#b9bec5" stroke="#7c838c" stroke-width=".5"/><path d="M2.2 2.4 L6.8 1.6 L6.2 5.6 L2.6 6.2Z" fill="#f2f4f6"/><path d="M3.2 3 V5.4 M4.6 2.8 V5.2 M3.2 3 L4.6 5.2" stroke="#666" stroke-width=".6"/></svg>
<div class="t" style="left:834.6px;top:123.9px;font-size:6.5px;color:#2c2c2c;letter-spacing:-.17px;">2015/03/06 20:29</div>
<svg style="left:885.6px;top:123px" width="124.7" height="8.5" font-size="6.5" fill="#1c1c1c" font-weight="normal" stroke="#1c1c1c" stroke-width="0.12" xml:space="preserve"><text x="0.00" y="6.5">DJ-10-12</text><text x="26.73" y="6.5" textLength="36.56" lengthAdjust="spacingAndGlyphs">月期のユーロ圏</text><text x="63.29" y="6.5">GDP</text><text x="77.38" y="6.5" textLength="21.77" lengthAdjust="spacingAndGlyphs">、前期比</text><text x="99.14" y="6.5">0.3%</text><text x="113.96" y="6.5" textLength="9.74" lengthAdjust="spacingAndGlyphs">増…</text></svg>
<div class="a" style="left:824px;top:133.56px;width:189.5px;height:11.26px;background:#f4f4f5;border-bottom:1.1px solid #5d88cc"></div>
<svg style="left:824.4px;top:134.36px" width="9.4" height="9" viewBox="0 0 8.5 8"><path d="M0.4 1.4 L6.6 0.4 L8.2 1.4 L7.2 6.6 L1.6 7.6 L0.6 6.4Z" fill="#b9bec5" stroke="#7c838c" stroke-width=".5"/><path d="M2.2 2.4 L6.8 1.6 L6.2 5.6 L2.6 6.2Z" fill="#f2f4f6"/><path d="M3.2 3 V5.4 M4.6 2.8 V5.2 M3.2 3 L4.6 5.2" stroke="#666" stroke-width=".6"/></svg>
<div class="t" style="left:834.6px;top:135.16px;font-size:6.5px;color:#2c2c2c;letter-spacing:-.17px;">2015/03/06 15:27</div>
<svg style="left:885.6px;top:134.26px" width="124.7" height="8.5" font-size="6.5" fill="#1c1c1c" font-weight="normal" stroke="#1c1c1c" stroke-width="0.12" xml:space="preserve"><text x="0.00" y="6.5">DJ-</text><text x="10.11" y="6.5" textLength="102.54" lengthAdjust="spacingAndGlyphs">【市場の声】ドル、米賃金指標が好調なら</text><text x="112.65" y="6.5">12</text><text x="119.88" y="6.5" textLength="3.82" lengthAdjust="spacingAndGlyphs">…</text></svg>
<div class="a" style="left:824px;top:144.82px;width:189.5px;height:11.26px;background:#f4f4f5;border-bottom:1.1px solid #5d88cc"></div>
<svg style="left:824.4px;top:145.62px" width="9.4" height="9" viewBox="0 0 8.5 8"><path d="M0.4 1.4 L6.6 0.4 L8.2 1.4 L7.2 6.6 L1.6 7.6 L0.6 6.4Z" fill="#b9bec5" stroke="#7c838c" stroke-width=".5"/><path d="M2.2 2.4 L6.8 1.6 L6.2 5.6 L2.6 6.2Z" fill="#f2f4f6"/><path d="M3.2 3 V5.4 M4.6 2.8 V5.2 M3.2 3 L4.6 5.2" stroke="#666" stroke-width=".6"/></svg>
<div class="t" style="left:834.6px;top:146.42px;font-size:6.5px;color:#2c2c2c;letter-spacing:-.17px;">2015/03/06 12:09</div>
<svg style="left:885.6px;top:145.52px" width="126.0" height="8.5" font-size="6.5" fill="#1c1c1c" font-weight="normal" stroke="#1c1c1c" stroke-width="0.12" xml:space="preserve"><text x="0.00" y="6.5">DJ-[</text><text x="11.91" y="6.5" textLength="12.11" lengthAdjust="spacingAndGlyphs">訂正</text><text x="24.03" y="6.5">]</text><text x="25.83" y="6.5" textLength="90.00" lengthAdjust="spacingAndGlyphs">【市場の声】ドル高トレンド変わらず、</text><text x="115.83" y="6.5">M</text><text x="121.25" y="6.5" textLength="3.75" lengthAdjust="spacingAndGlyphs">…</text></svg>
<div class="a" style="left:824px;top:156.08px;width:189.5px;height:11.26px;background:#f4f4f5;border-bottom:1.1px solid #5d88cc"></div>
<svg style="left:824.4px;top:156.88px" width="9.4" height="9" viewBox="0 0 8.5 8"><path d="M0.4 1.4 L6.6 0.4 L8.2 1.4 L7.2 6.6 L1.6 7.6 L0.6 6.4Z" fill="#b9bec5" stroke="#7c838c" stroke-width=".5"/><path d="M2.2 2.4 L6.8 1.6 L6.2 5.6 L2.6 6.2Z" fill="#f2f4f6"/><path d="M3.2 3 V5.4 M4.6 2.8 V5.2 M3.2 3 L4.6 5.2" stroke="#666" stroke-width=".6"/></svg>
<div class="t" style="left:834.6px;top:157.68px;font-size:6.5px;color:#2c2c2c;letter-spacing:-.17px;">2015/03/06 11:14</div>
<svg style="left:885.6px;top:156.78px" width="126.0" height="8.5" font-size="6.5" fill="#1c1c1c" font-weight="normal" stroke="#1c1c1c" stroke-width="0.12" xml:space="preserve"><text x="0.00" y="6.5">DJ-</text><text x="10.11" y="6.5" textLength="31.37" lengthAdjust="spacingAndGlyphs">【市場の声】</text><text x="41.48" y="6.5">2</text><text x="45.09" y="6.5" textLength="79.91" lengthAdjust="spacingAndGlyphs">月の米雇用統計、寒波の影響…</text></svg>
<div class="a" style="left:824px;top:167.34px;width:189.5px;height:11.26px;background:#f4f4f5;border-bottom:1.1px solid #5d88cc"></div>
<svg style="left:824.4px;top:168.14px" width="9.4" height="9" viewBox="0 0 8.5 8"><path d="M0.4 1.4 L6.6 0.4 L8.2 1.4 L7.2 6.6 L1.6 7.6 L0.6 6.4Z" fill="#b9bec5" stroke="#7c838c" stroke-width=".5"/><path d="M2.2 2.4 L6.8 1.6 L6.2 5.6 L2.6 6.2Z" fill="#f2f4f6"/><path d="M3.2 3 V5.4 M4.6 2.8 V5.2 M3.2 3 L4.6 5.2" stroke="#666" stroke-width=".6"/></svg>
<div class="t" style="left:834.6px;top:168.94px;font-size:6.5px;color:#2c2c2c;letter-spacing:-.17px;">2015/03/06 11:13</div>
<svg style="left:885.6px;top:168.04px" width="123.7" height="8.5" font-size="6.5" fill="#1c1c1c" font-weight="normal" stroke="#1c1c1c" stroke-width="0.12" xml:space="preserve"><text x="0.00" y="6.5">DJ-</text><text x="10.11" y="6.5" textLength="103.37" lengthAdjust="spacingAndGlyphs">【市場の声】ドル高トレンド変わらず、海外</text><text x="113.48" y="6.5">M</text><text x="118.90" y="6.5" textLength="3.80" lengthAdjust="spacingAndGlyphs">…</text></svg>
<div class="a" style="left:824px;top:178.6px;width:189.5px;height:1.6px;background:#f4f4f5"></div>
<div class="a" style="left:1013.5px;top:56.6px;width:10.5px;height:123.6px;background:#c6daf6;border-left:1px solid #a9c2ea"></div>
<svg style="left:1014.2px;top:57.2px" width="9.6" height="9.4" viewBox="0 0 9.6 9.4"><rect x=".4" y=".4" width="8.8" height="8.6" rx="1" fill="#bfd5f6" stroke="#5f88c8" stroke-width=".9"/><path d="M2.8 5.8 l2 -2.2 l2 2.2z" fill="#1c2c44"/></svg>
<div class="a" style="left:1014.6px;top:67.2px;width:8.8px;height:16.4px;background:linear-gradient(90deg,#c2d8f7,#8fb4ea 60%,#7ea8e4);border:.8px solid #6f95d0;border-radius:1px"></div>
<svg style="left:1014.2px;top:170.8px" width="9.6" height="9.2" viewBox="0 0 9.6 9.2"><rect x=".4" y=".4" width="8.8" height="8.4" rx="1" fill="#bfd5f6" stroke="#5f88c8" stroke-width=".9"/><path d="M2.8 3.5 l2 2.2 l2 -2.2z" fill="#1c2c44"/></svg>
<div class="a" style="left:914.5px;top:180.8px;width:18px;height:1.2px;background:repeating-linear-gradient(90deg,#8fb0e0 0,#8fb0e0 1px,transparent 1px,transparent 2px)"></div>
<div class="a" style="left:823px;top:182.4px;width:201px;height:214.1px;background:#fff;border:1.4px solid #86a6d8;border-right:0;border-top:1px solid #6f98d4;border-bottom:1.7px solid #4a7cc8"></div>
<div class="cap" style="left:824px;top:183.2px;width:200px;height:12px;border-top:0"></div>
<svg style="left:826.5px;top:185.8px" width="17.5" height="8.6"><text x="0" y="6.6" font-size="6.6" fill="#16202c" font-weight="normal" textLength="17.5" lengthAdjust="spacingAndGlyphs" stroke="#16202c" stroke-width="0.22">ニュース</text></svg>
<svg style="left:1014.4px;top:185.6px" width="6" height="6" viewBox="0 0 6 6"><path d="M0.6 0.6 L5.4 5.4 M5.4 0.6 L0.6 5.4" stroke="#16202c" stroke-width=".95"/></svg>
<div class="a" style="left:824.5px;top:195.1px;width:188.5px;height:0.8px;background:#7fa2d8"></div>
<div class="a" style="left:1013.5px;top:195.8px;width:10.5px;height:199.3px;background:#c6daf6;border-left:1px solid #a9c2ea"></div>
<svg style="left:1014.2px;top:196.4px" width="9.6" height="9.2" viewBox="0 0 9.6 9.2"><rect x=".4" y=".4" width="8.8" height="8.4" rx="1" fill="#bfd5f6" stroke="#5f88c8" stroke-width=".9"/><path d="M2.8 5.7 l2 -2.2 l2 2.2z" fill="#1c2c44"/></svg>
<div class="a" style="left:1014.6px;top:206.2px;width:8.8px;height:17.2px;background:linear-gradient(90deg,#c2d8f7,#8fb4ea 60%,#7ea8e4);border:.8px solid #6f95d0;border-radius:1px"></div>
<svg style="left:1014.2px;top:385.4px" width="9.6" height="9.4" viewBox="0 0 9.6 9.4"><rect x=".4" y=".4" width="8.8" height="8.6" rx="1" fill="#bfd5f6" stroke="#5f88c8" stroke-width=".9"/><path d="M2.8 3.6 l2 2.2 l2 -2.2z" fill="#1c2c44"/></svg>
<div class="a" style="left:824.5px;top:385px;width:189px;height:10px;background:#c9dcf7;border-top:1px solid #a9c2ea"></div>
<svg style="left:825px;top:385.6px" width="9.4" height="9" viewBox="0 0 9.4 9"><rect x=".4" y=".4" width="8.6" height="8.2" rx="1" fill="#bfd5f6" stroke="#5f88c8" stroke-width=".9"/><path d="M5.8 2.5 l-2.2 2 l2.2 2z" fill="#1c2c44"/></svg>
<div class="a" style="left:835px;top:386px;width:15.6px;height:8.2px;background:linear-gradient(180deg,#c9dcf8,#9dbdec);border:.8px solid #6f95d0;border-radius:1px"></div>
<svg style="left:1003.6px;top:385.6px" width="9.4" height="9" viewBox="0 0 9.4 9"><rect x=".4" y=".4" width="8.6" height="8.2" rx="1" fill="#bfd5f6" stroke="#5f88c8" stroke-width=".9"/><path d="M3.6 2.5 l2.2 2 l-2.2 2z" fill="#1c2c44"/></svg>
<div class="a" style="left:0px;top:397px;width:1024px;height:130.5px;background:#e6f1fd;border-left:1.2px solid #8aaada;border-right:1.2px solid #8aaada"></div>
<div class="a" style="left:0px;top:425px;width:1.2px;height:102px;background:#0f4a9c"></div>
<div class="a" style="left:1022.6px;top:425px;width:1.4px;height:102px;background:#1a56a8"></div>
<div class="cap" style="left:1.5px;top:398px;width:1021px;height:13.4px;border-top:1px solid #a9c4ec"></div>
<svg style="left:3.5px;top:401.4px" width="19" height="8.6"><text x="0" y="6.6" font-size="6.6" fill="#16202c" font-weight="normal" textLength="19" lengthAdjust="spacingAndGlyphs" stroke="#16202c" stroke-width="0.22">アラーム</text></svg>
<svg style="left:1014.4px;top:401.4px" width="6" height="6" viewBox="0 0 6 6"><path d="M0.5 0.5 L5.5 5.5 M5.5 0.5 L0.5 5.5" stroke="#16202c" stroke-width=".95"/></svg>
<div class="a" style="left:1.5px;top:411.4px;width:1021px;height:13.4px;background:#e6f1fd;border-top:1px solid #b4cbef"></div>
<div class="a" style="left:4px;top:413.6px;width:39px;height:11.2px;background:linear-gradient(180deg,#cfe0f8,#b4cdf2 60%,#a6c2ee);border:1px solid #6f98d4;border-bottom:0;border-radius:2px 2px 0 0"></div>
<svg style="left:7px;top:415.5px" width="34.0" height="8.5" font-size="6.5" fill="#101828" font-weight="normal" stroke="#101828" stroke-width="0.25" xml:space="preserve"><text x="0.00" y="6.5" textLength="23.25" lengthAdjust="spacingAndGlyphs">ポジション</text><text x="23.25" y="6.5">&#160;(3)</text></svg>
<div class="a" style="left:43.5px;top:413.6px;width:38.5px;height:11.2px;background:linear-gradient(180deg,#cfe0f8,#b4cdf2 60%,#a6c2ee);border:1px solid #6f98d4;border-bottom:0;border-radius:2px 2px 0 0"></div>
<svg style="left:47.25px;top:415.5px" width="32.0" height="8.5" font-size="6.5" fill="#101828" font-weight="normal" stroke="#101828" stroke-width="0.25" xml:space="preserve"><text x="0.00" y="6.5" textLength="31.00" lengthAdjust="spacingAndGlyphs">発注済注文</text></svg>
<div class="a" style="left:82.5px;top:413.6px;width:31px;height:11.2px;background:linear-gradient(180deg,#cfe0f8,#b4cdf2 60%,#a6c2ee);border:1px solid #6f98d4;border-bottom:0;border-radius:2px 2px 0 0"></div>
<svg style="left:86px;top:415.5px" width="25.0" height="8.5" font-size="6.5" fill="#101828" font-weight="normal" stroke="#101828" stroke-width="0.25" xml:space="preserve"><text x="0.00" y="6.5" textLength="24.00" lengthAdjust="spacingAndGlyphs">約定一覧</text></svg>
<div class="a" style="left:114px;top:413.6px;width:29.5px;height:11.2px;background:linear-gradient(180deg,#cfe0f8,#b4cdf2 60%,#a6c2ee);border:1px solid #6f98d4;border-bottom:0;border-radius:2px 2px 0 0"></div>
<svg style="left:117.25px;top:415.5px" width="24.0" height="8.5" font-size="6.5" fill="#101828" font-weight="normal" stroke="#101828" stroke-width="0.25" xml:space="preserve"><text x="0.00" y="6.5" textLength="23.00" lengthAdjust="spacingAndGlyphs">レバレッジ</text></svg>
<div class="a" style="left:144px;top:413.6px;width:31px;height:11.2px;background:linear-gradient(180deg,#cfe0f8,#b4cdf2 60%,#a6c2ee);border:1px solid #6f98d4;border-bottom:0;border-radius:2px 2px 0 0"></div>
<svg style="left:147px;top:415.5px" width="26.0" height="8.5" font-size="6.5" fill="#101828" font-weight="normal" stroke="#101828" stroke-width="0.25" xml:space="preserve"><text x="0.00" y="6.5" textLength="25.00" lengthAdjust="spacingAndGlyphs">残高情報</text></svg>
<div class="a" style="left:175.5px;top:412.4px;width:27px;height:12.6px;background:#f2f8fe;border:1px solid #6f98d4;border-bottom:0;border-radius:2px 2px 0 0"></div>
<svg style="left:178.5px;top:415px" width="20" height="8.6"><text x="0" y="6.6" font-size="6.6" fill="#16202c" font-weight="normal" textLength="20" lengthAdjust="spacingAndGlyphs" stroke="#16202c" stroke-width="0.22">アラーム</text></svg>
<div class="a" style="left:1.5px;top:424.8px;width:1021px;height:14.4px;background:linear-gradient(180deg,#cfe0f8 0,#b9d0f3 45%,#93b4e6 100%);border-top:1px solid #3a70c0;border-bottom:1px solid #3a70c0"></div>
<div class="a" style="left:54.6px;top:425.8px;width:1px;height:12.6px;background:#4a78c0"></div>
<div class="a" style="left:969px;top:425.8px;width:1px;height:12.6px;background:#4a78c0"></div>
<svg style="left:5px;top:427.8px" width="23" height="8.4"><text x="0" y="6.4" font-size="6.4" fill="#16202c" font-weight="normal" textLength="23" lengthAdjust="spacingAndGlyphs" stroke="#16202c" stroke-width="0.22">通貨ペア</text></svg>
<svg style="left:58px;top:427.8px" width="14.5" height="8.4"><text x="0" y="6.4" font-size="6.4" fill="#16202c" font-weight="normal" textLength="14.5" lengthAdjust="spacingAndGlyphs" stroke="#16202c" stroke-width="0.22">サイド</text></svg>
<svg style="left:972.5px;top:427.8px" width="21.5" height="8.4"><text x="0" y="6.4" font-size="6.4" fill="#16202c" font-weight="normal" textLength="21.5" lengthAdjust="spacingAndGlyphs" stroke="#16202c" stroke-width="0.22">オン/オフ</text></svg>
<div class="a" style="left:1.5px;top:439.2px;width:1021px;height:87.4px;background:#7ea5e0;border-bottom:1.2px solid #1d57a8"></div>
<div class="a" style="left:0px;top:527.2px;width:1024px;height:14px;background:linear-gradient(180deg,#d3e3f9 0,#b5cdf2 45%,#98b8e8 60%,#a6c3ec 100%);border-top:1px solid #e4eefc"></div>
<div class="a" style="left:0px;top:541px;width:1024px;height:14px;background:linear-gradient(180deg,#d3e3f9 0,#b5cdf2 45%,#98b8e8 60%,#a6c3ec 100%);border-top:1px solid #7fa2d8"></div>
<svg style="left:2.5px;top:530.8px" width="24.4" height="8.8" font-size="6.8" fill="#10141c" font-weight="bold" stroke="#10141c" stroke-width="0" xml:space="preserve"><text x="0.00" y="6.8" textLength="21.14" lengthAdjust="spacingAndGlyphs">口座名</text><text x="21.14" y="6.8">:</text></svg>
<div class="a" style="left:26px;top:530.4px;width:43px;height:10.2px;background:#fff;border:1.4px solid #0a0a0a"></div>
<svg style="left:314.2px;top:530.8px" width="30.6" height="8.8" font-size="6.8" fill="#10141c" font-weight="bold" stroke="#10141c" stroke-width="0" xml:space="preserve"><text x="0.00" y="6.8" textLength="27.34" lengthAdjust="spacingAndGlyphs">口座残高</text><text x="27.34" y="6.8">:</text></svg>
<svg style="left:349px;top:530.8px" width="35.0" height="8.8" font-size="6.8" fill="#10141c" font-weight="bold" stroke="#10141c" stroke-width="0" xml:space="preserve"><text x="0.00" y="6.8">¥1,101,571</text></svg>
<svg style="left:627.6px;top:530.8px" width="37.6" height="8.8" font-size="6.8" fill="#10141c" font-weight="bold" stroke="#10141c" stroke-width="0" xml:space="preserve"><text x="0.00" y="6.8" textLength="34.34" lengthAdjust="spacingAndGlyphs">有効証拠金</text><text x="34.34" y="6.8">:</text></svg>
<svg style="left:666.6px;top:530.8px" width="29.4" height="8.8" font-size="6.8" fill="#10141c" font-weight="bold" stroke="#10141c" stroke-width="0" xml:space="preserve"><text x="0.00" y="6.8">¥540,546</text></svg>
<svg style="left:948.7px;top:530.8px" width="43.5" height="8.8" font-size="6.8" fill="#10141c" font-weight="bold" stroke="#10141c" stroke-width="0" xml:space="preserve"><text x="0.00" y="6.8" textLength="40.24" lengthAdjust="spacingAndGlyphs">証拠金使用率</text><text x="40.24" y="6.8">:</text></svg>
<svg style="left:993.6px;top:530.8px" width="14.6" height="8.8" font-size="6.8" fill="#10141c" font-weight="bold" stroke="#10141c" stroke-width="0" xml:space="preserve"><text x="0.00" y="6.8">20%</text></svg>
<svg style="left:2.2px;top:544.4px" width="42.8" height="8.8" font-size="6.8" fill="#10141c" font-weight="bold" stroke="#10141c" stroke-width="0" xml:space="preserve"><text x="0.00" y="6.8" textLength="39.54" lengthAdjust="spacingAndGlyphs">前回のログイン</text><text x="39.54" y="6.8">:</text></svg>
<svg style="left:47.5px;top:544.32px" width="78.3" height="8.88" font-size="6.88" fill="#10141c" font-weight="bold" stroke="#10141c" stroke-width="0" xml:space="preserve"><text x="0.00" y="6.88">2015/03/07&#160;3:53:33&#160;GMT</text></svg>
<svg style="left:473.7px;top:544.4px" width="43.5" height="8.8" font-size="6.8" fill="#10141c" font-weight="bold" stroke="#10141c" stroke-width="0" xml:space="preserve"><text x="0.00" y="6.8" textLength="40.24" lengthAdjust="spacingAndGlyphs">取引可能金額</text><text x="40.24" y="6.8">:</text></svg>
<svg style="left:519.6px;top:544.4px" width="29.4" height="8.8" font-size="6.8" fill="#10141c" font-weight="bold" stroke="#10141c" stroke-width="0" xml:space="preserve"><text x="0.00" y="6.8">¥434,158</text></svg>
<div class="a" style="left:471px;top:542.4px;width:1px;height:12px;background:#6f95d0"></div>
<div class="a" style="left:451.6px;top:542.4px;width:1px;height:12px;background:#8fb0e0"></div>
<div class="a" style="left:941px;top:542.4px;width:1px;height:12px;background:#6f95d0"></div>
<div class="a" style="left:942.8px;top:543px;width:55.8px;height:11.4px;border:1px solid #6f95d0;background:linear-gradient(180deg,#d6e5fa,#b4ccf1)"></div>
<svg style="left:945.4px;top:544.4px" width="51.6" height="8.8" font-size="6.8" fill="#10141c" font-weight="bold" stroke="#10141c" stroke-width="0" xml:space="preserve"><text x="0.00" y="6.8" textLength="34.91" lengthAdjust="spacingAndGlyphs">接続しました</text><text x="34.91" y="6.8">-</text><text x="37.17" y="6.8" textLength="13.43" lengthAdjust="spacingAndGlyphs">本番</text></svg>
<div class="a" style="left:1000.6px;top:543px;width:15.4px;height:11.4px;border:1px solid #6f95d0;background:linear-gradient(180deg,#d6e5fa,#b4ccf1)"></div>
<svg style="left:1003px;top:544px" width="10" height="10" viewBox="0 0 10 10"><circle cx="4.6" cy="5" r="4" fill="#c9ced2" stroke="#8d959c" stroke-width=".6"/><circle cx="6.6" cy="6.6" r="2.6" fill="#58b846" stroke="#2f8a28" stroke-width=".5"/></svg>
</body></html>
